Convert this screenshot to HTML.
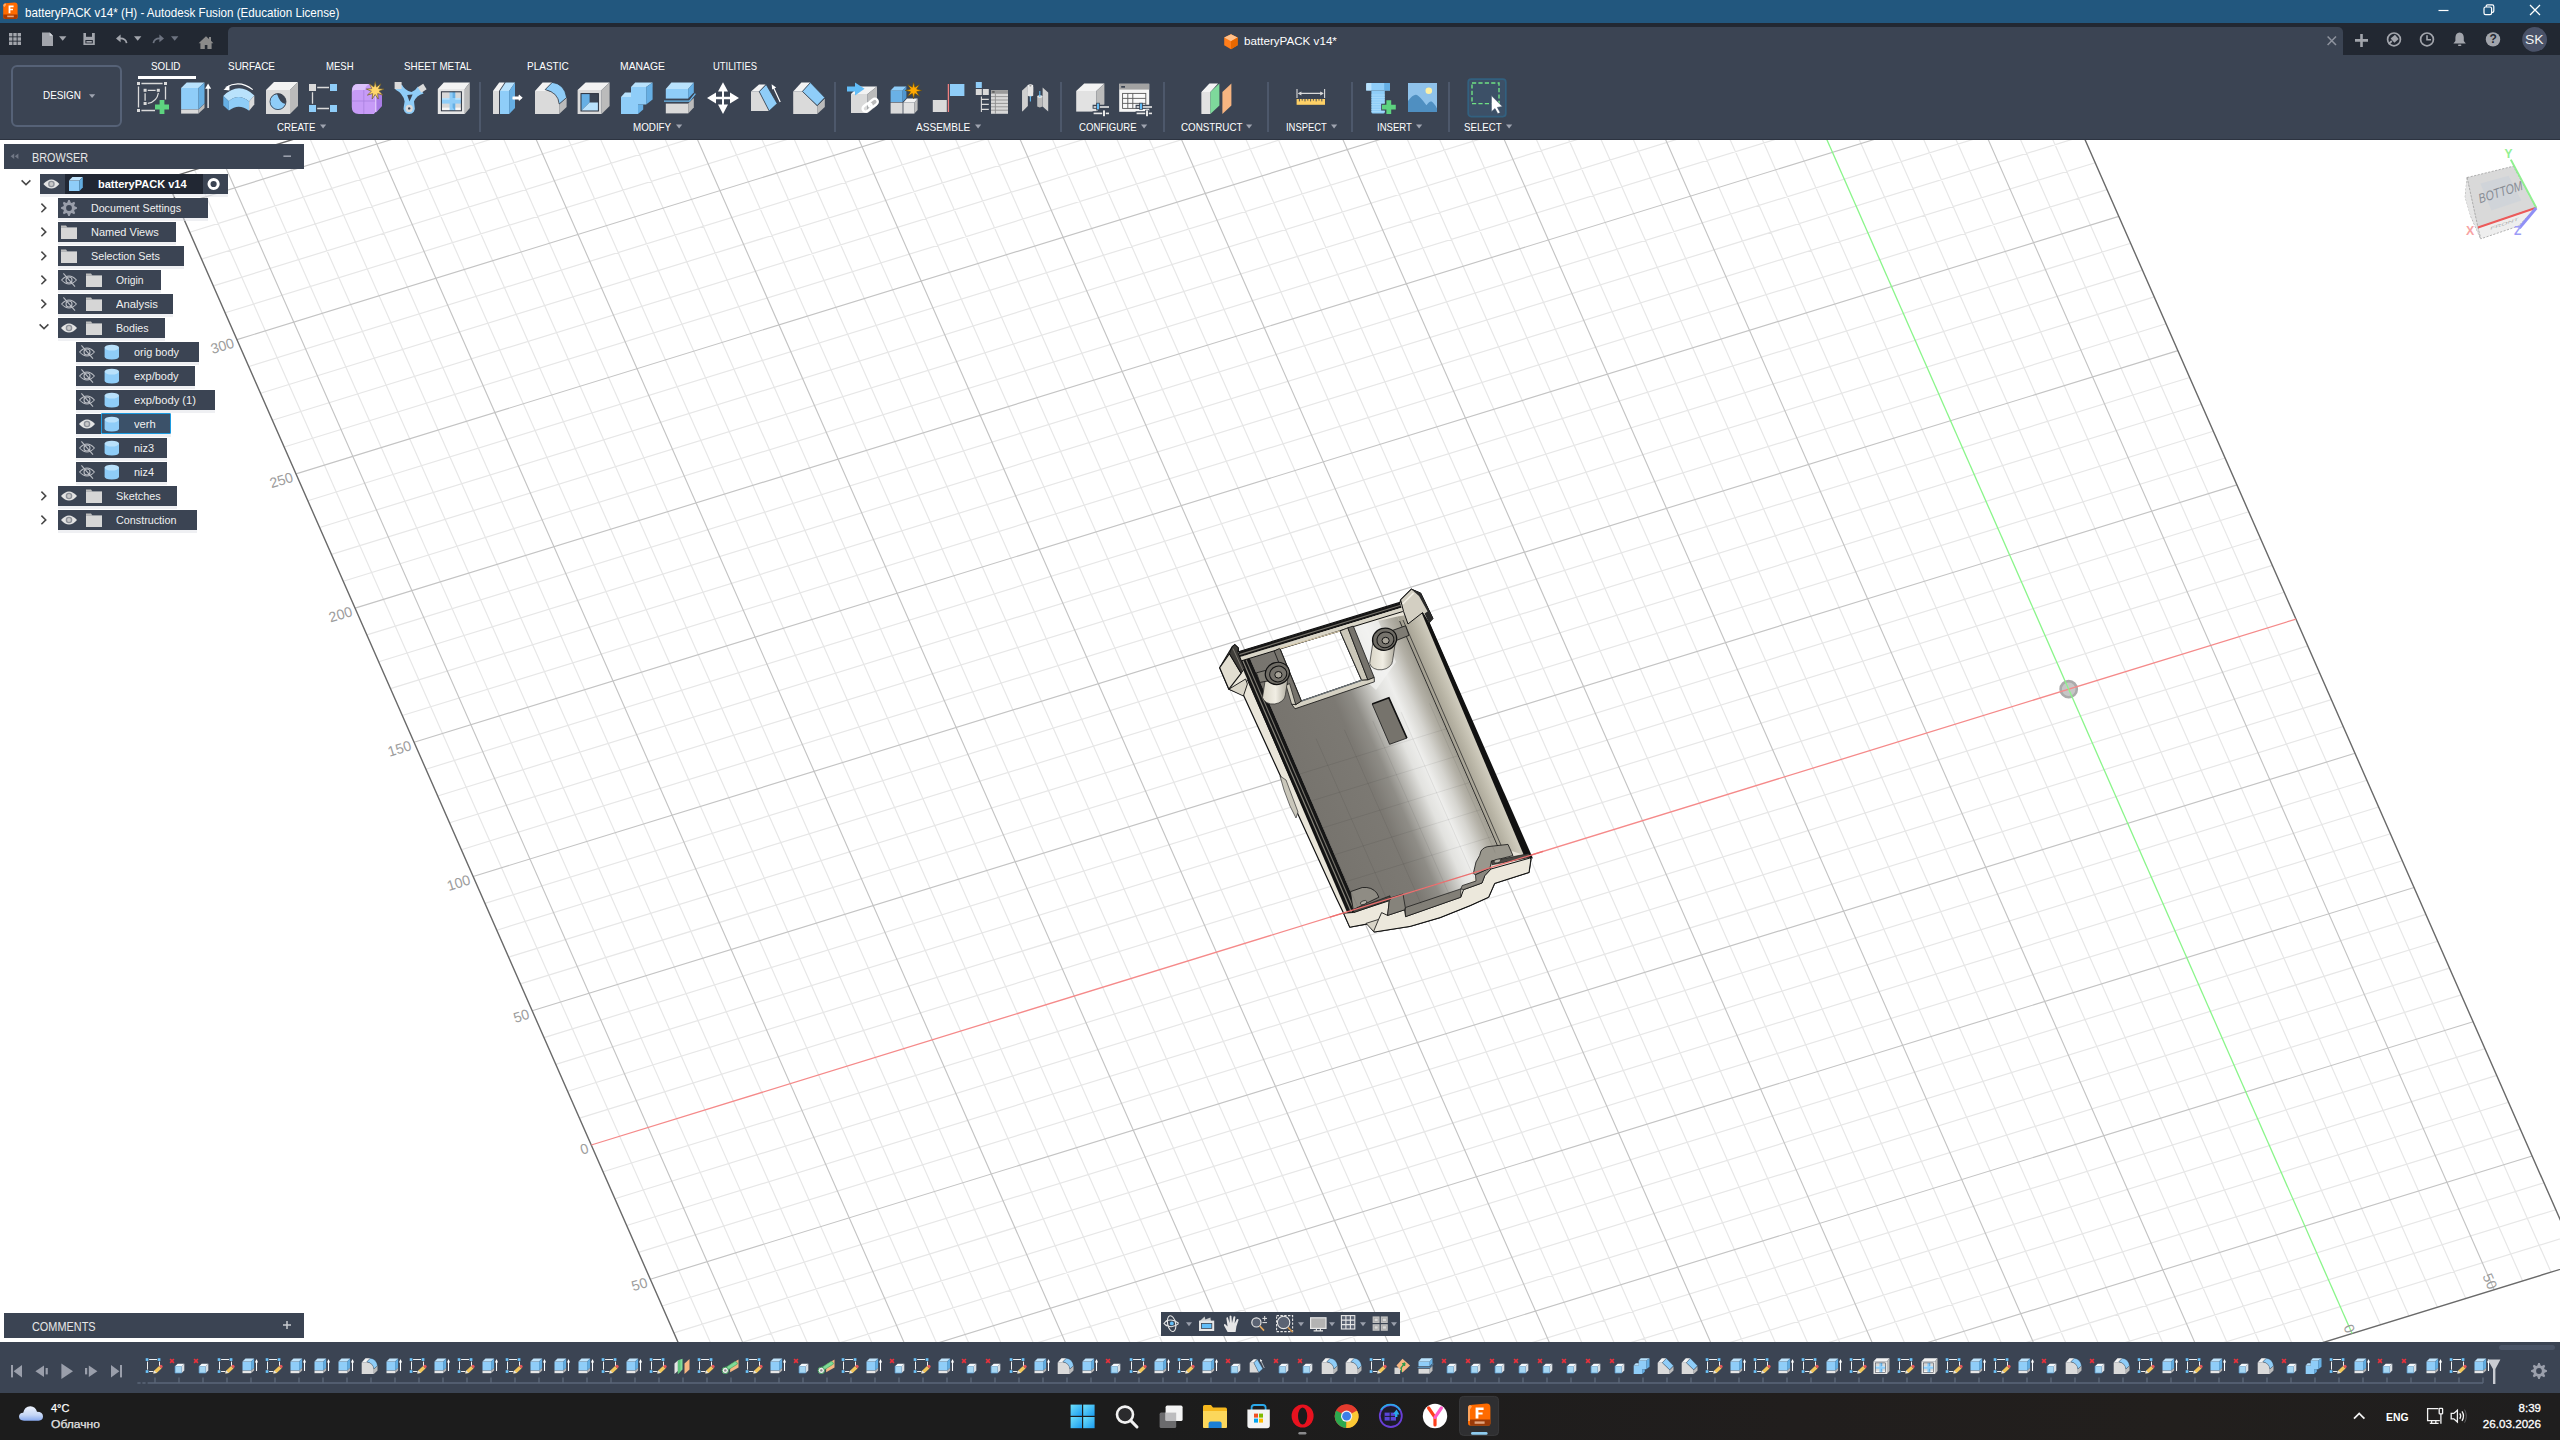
<!DOCTYPE html>
<html><head><meta charset="utf-8"><title>batteryPACK v14</title>
<style>
html,body{margin:0;padding:0}
body{width:2560px;height:1440px;position:relative;overflow:hidden;background:#fff;font-family:"Liberation Sans",sans-serif;}
svg{overflow:visible}
svg text{font-family:"Liberation Sans",sans-serif}
#cv{position:absolute;left:0;top:140px;width:2560px;height:1202px;overflow:hidden;background:#fff}
</style></head><body>

<div id="cv"><svg style="position:absolute;left:0;top:-140px" width="2560" height="1440">
<path d="M903.1 1780.5L194.5 169.8M960.0 1763.0L251.4 152.3M988.4 1754.2L279.8 143.5M1016.8 1745.4L308.2 134.7M1045.2 1736.7L336.6 126.0M1102.0 1719.1L393.4 108.4M1130.4 1710.4L421.8 99.7M1158.8 1701.6L450.2 90.9M1187.2 1692.8L478.6 82.1M1244.1 1675.3L535.5 64.6M1272.5 1666.5L563.9 55.9M1300.9 1657.8L592.3 47.1M1329.3 1649.0L620.7 38.3M1386.1 1631.5L677.5 20.8M1414.5 1622.7L705.9 12.0M1443.0 1614.0L734.4 3.3M1471.4 1605.2L762.8 -5.5M1528.2 1587.7L819.6 -23.0M1556.6 1578.9L848.0 -31.8M1585.0 1570.1L876.4 -40.6M1613.4 1561.4L904.8 -49.3M1670.3 1543.8L961.7 -66.9M1698.7 1535.1L990.1 -75.6M1727.1 1526.3L1018.5 -84.4M1755.5 1517.5L1046.9 -93.2M1812.3 1500.0L1103.7 -110.7M1840.7 1491.2L1132.1 -119.4M1869.1 1482.5L1160.5 -128.2M1897.5 1473.7L1188.9 -137.0M1954.4 1456.2L1245.8 -154.5M1982.8 1447.4L1274.2 -163.3M2011.2 1438.7L1302.6 -172.0M2039.6 1429.9L1331.0 -180.8M2096.4 1412.4L1387.8 -198.3M2124.8 1403.6L1416.2 -207.1M2153.3 1394.8L1444.7 -215.9M2181.7 1386.1L1473.1 -224.6M2238.5 1368.5L1529.9 -242.2M2266.9 1359.8L1558.3 -250.9M2295.3 1351.0L1586.7 -259.7M2323.7 1342.2L1615.1 -268.5M2380.6 1324.7L1672.0 -286.0M2409.0 1316.0L1700.4 -294.7M2437.4 1307.2L1728.8 -303.5M2465.8 1298.4L1757.2 -312.3M2522.6 1280.9L1814.0 -329.8M2551.0 1272.1L1842.4 -338.6M862.9 1762.4L2567.6 1236.5M851.1 1735.6L2555.8 1209.7M839.3 1708.7L2544.0 1182.8M815.7 1655.0L2520.4 1129.1M803.9 1628.2L2508.6 1102.3M792.0 1601.3L2496.8 1075.4M780.2 1574.5L2485.0 1048.6M756.6 1520.8L2461.3 994.9M744.8 1494.0L2449.5 968.1M733.0 1467.1L2437.7 941.2M721.2 1440.3L2425.9 914.4M697.6 1386.6L2402.3 860.7M685.8 1359.7L2390.5 833.8M673.9 1332.9L2378.7 807.0M662.1 1306.0L2366.9 780.2M638.5 1252.4L2343.2 726.5M626.7 1225.5L2331.4 699.6M614.9 1198.7L2319.6 672.8M603.1 1171.8L2307.8 645.9M579.5 1118.1L2284.2 592.2M567.7 1091.3L2272.4 565.4M555.8 1064.4L2260.6 538.5M544.0 1037.6L2248.8 511.7M520.4 983.9L2225.1 458.0M508.6 957.1L2213.3 431.2M496.8 930.2L2201.5 404.3M485.0 903.4L2189.7 377.5M461.4 849.7L2166.1 323.8M449.6 822.8L2154.3 296.9M437.7 796.0L2142.5 270.1M425.9 769.2L2130.7 243.3M402.3 715.5L2107.0 189.6M390.5 688.6L2095.2 162.7M378.7 661.8L2083.4 135.9M366.9 634.9L2071.6 109.0M343.3 581.2L2048.0 55.3M331.5 554.4L2036.2 28.5M319.6 527.5L2024.4 1.6M307.8 500.7L2012.6 -25.2M284.2 447.0L1988.9 -78.9M272.4 420.2L1977.1 -105.7M260.6 393.3L1965.3 -132.6M248.8 366.5L1953.5 -159.4M225.2 312.8L1929.9 -213.1M213.4 285.9L1918.1 -240.0M201.5 259.1L1906.3 -266.8M189.7 232.2L1894.5 -293.6" stroke="#e7e7e7" stroke-width="1.2" fill="none"/>
<path d="M931.5 1771.7L222.9 161.0M1073.6 1727.9L365.0 117.2M1215.7 1684.1L507.1 73.4M1357.7 1640.3L649.1 29.6M1499.8 1596.4L791.2 -14.3M1641.8 1552.6L933.2 -58.1M1783.9 1508.8L1075.3 -101.9M1926.0 1465.0L1217.4 -145.7M2068.0 1421.1L1359.4 -189.6M2210.1 1377.3L1501.5 -233.4M2494.2 1289.7L1785.6 -321.0M827.5 1681.9L2532.2 1156.0M768.4 1547.7L2473.1 1021.8M709.4 1413.4L2414.1 887.5M650.3 1279.2L2355.0 753.3M532.2 1010.8L2236.9 484.9M473.2 876.5L2177.9 350.6M414.1 742.3L2118.8 216.4M355.1 608.1L2059.8 82.2M296.0 473.9L2000.7 -52.0M237.0 339.6L1941.7 -186.3M177.9 205.4L1882.6 -320.5" stroke="#c4c4c4" stroke-width="1.15" fill="none"/>
<path d="M874.7 1789.3L2579.4 1263.4L1870.8 -347.3L166.1 178.6Z" stroke="#6a6a6a" stroke-width="1.4" fill="none"/>
<circle cx="2068.7" cy="689.2" r="8.1" fill="#c6c6c6" stroke="#ababab" stroke-width="2.6"/>
<path d="M591.3 1145.0L2296.0 619.1" stroke="#f58a8a" stroke-width="1.3" fill="none"/>
<path d="M2352.1 1333.5L1643.5 -277.2" stroke="#8af58a" stroke-width="1.3" fill="none"/>
<text transform="translate(650.3,1279.2) rotate(-17.14)" x="-4" y="6.6" text-anchor="end" font-size="14.2" fill="#9d9d9d">50</text>
<text transform="translate(591.3,1145.0) rotate(-17.14)" x="-4" y="6.6" text-anchor="end" font-size="14.2" fill="#9d9d9d">0</text>
<text transform="translate(532.2,1010.8) rotate(-17.14)" x="-4" y="6.6" text-anchor="end" font-size="14.2" fill="#9d9d9d">50</text>
<text transform="translate(473.2,876.5) rotate(-17.14)" x="-4" y="6.6" text-anchor="end" font-size="14.2" fill="#9d9d9d">100</text>
<text transform="translate(414.1,742.3) rotate(-17.14)" x="-4" y="6.6" text-anchor="end" font-size="14.2" fill="#9d9d9d">150</text>
<text transform="translate(355.1,608.1) rotate(-17.14)" x="-4" y="6.6" text-anchor="end" font-size="14.2" fill="#9d9d9d">200</text>
<text transform="translate(296.0,473.9) rotate(-17.14)" x="-4" y="6.6" text-anchor="end" font-size="14.2" fill="#9d9d9d">250</text>
<text transform="translate(237.0,339.6) rotate(-17.14)" x="-4" y="6.6" text-anchor="end" font-size="14.2" fill="#9d9d9d">300</text>
<text transform="translate(2352.1,1333.5) rotate(66.25)" x="-1.5" y="5.5" text-anchor="end" font-size="14.2" fill="#9d9d9d">0</text>
<text transform="translate(2494.2,1289.7) rotate(66.25)" x="-1.5" y="5.5" text-anchor="end" font-size="14.2" fill="#9d9d9d">50</text>
<defs>
<linearGradient id="flr" gradientUnits="userSpaceOnUse" x1="1311" y1="800" x2="1451.2" y2="738.8">
<stop offset="0" stop-color="#77746e"/><stop offset=".40" stop-color="#7c7973"/><stop offset=".52" stop-color="#8f8d87"/><stop offset=".62" stop-color="#bdbcb7"/><stop offset=".70" stop-color="#e2e2df"/><stop offset=".78" stop-color="#eeeeec"/><stop offset=".86" stop-color="#d6d5d0"/><stop offset=".94" stop-color="#b3b0a6"/><stop offset="1" stop-color="#a09d91"/></linearGradient>
<linearGradient id="rwl" gradientUnits="userSpaceOnUse" x1="1397.4" y1="616.4" x2="1421.4" y2="606.4">
<stop offset="0" stop-color="#9f9b8d"/><stop offset=".5" stop-color="#bab6a7"/><stop offset="1" stop-color="#d5d1c3"/></linearGradient>
<linearGradient id="boss" x1="0" y1="0" x2="1" y2="0"><stop offset="0" stop-color="#d8d4c6"/><stop offset=".5" stop-color="#f1eee4"/><stop offset="1" stop-color="#a9a598"/></linearGradient>
</defs>
<path d="M1219.7 667.8L1232.2 646.7L1234.8 644.6L1238.4 648.0L1238.4 651.8L1400.0 602.4L1400.6 599.9L1411.4 589.2L1420.6 593.2L1432.8 618.4L1428.8 622.8L1531.0 858.6L1529.0 872.4L1494.6 883.4L1488.6 897.2L1470.0 905.6L1440.0 917.6L1410.0 926.4L1374.4 932.0L1367.8 923.8L1349.8 927.2L1343.6 913.2L1336.4 898.2L1243.4 695.0L1228.9 689.2ZM1279.7 648.3L1340.1 631.0L1361.7 680.3L1301.3 701.1Z" fill="#e9e5d9" fill-rule="evenodd" stroke="#111111" stroke-width="1.2" stroke-linejoin="round"/>
<path d="M1247.0 651.4L1397.4 616.4L1497.0 846.6L1492.0 866.0L1476.0 876.0L1463.0 890.0L1406.0 910.0L1390.0 900.0L1358.6 910.4ZM1279.7 648.3L1340.1 631.0L1361.7 680.3L1301.3 701.1Z" fill="url(#flr)" fill-rule="evenodd"/>
<path d="M1352.0 628.0L1378.0 620.0L1396.0 662.0L1376.0 690.0L1366.0 681.0Z" fill="#f4f4f2" opacity=".7"/>
<path d="M1397.4 616.4L1422.6 612.6L1528.0 856.0L1497.0 846.6Z" fill="url(#rwl)"/>
<path d="M1399.6 621.0L1498.6 848.4" stroke="#222" stroke-width=".9" fill="none"/>
<path d="M1403.0 620.0L1502.0 847.4" stroke="#222" stroke-width=".7" fill="none"/>
<path d="M1421.0 611.6L1424.8 611.6L1533.0 858.6L1524.4 856.4Z" fill="#111111"/>
<path d="M1236.4 654.0L1247.0 651.4L1358.6 910.4L1348.0 914.6Z" fill="#161616"/>
<path d="M1240.4 655.0L1351.8 913.0" stroke="#8a877d" stroke-width="1.2" fill="none"/>
<path d="M1243.6 654.0L1355.0 912.0" stroke="#77746c" stroke-width="1.1" fill="none"/>
<path d="M1247.4 679.8L1343.6 899.6" stroke="#111111" stroke-width="1" fill="none"/>
<path d="M1238.4 651.8L1400.0 602.4L1401.6 607.7L1240.0 657.1Z" fill="#161616"/>
<path d="M1239.2 654.6L1400.8 605.2" stroke="#77746c" stroke-width="1.1" fill="none"/>
<path d="M1240.0 657.1L1401.6 607.7L1402.8 611.5L1241.2 660.9Z" fill="#d9d5c7"/>
<path d="M1241.2 660.9L1402.8 611.5" stroke="#111111" stroke-width="1" fill="none"/>
<path d="M1340.1 631.0L1347.8 627.8L1367.9 679.9L1361.7 680.3Z" fill="#cbc7b9" stroke="#111111" stroke-width=".8"/>
<path d="M1347.8 627.8L1353.3 626.1L1374.2 677.5L1367.9 679.9Z" fill="#76736c" stroke="#111111" stroke-width=".8"/>
<path d="M1301.3 701.1L1361.7 680.3L1367.9 679.9L1374.2 677.5L1374.4 681.8L1295.0 708.8L1291.6 704.2L1295.7 704.6Z" fill="#d5d1c3" stroke="#111111" stroke-width=".8"/>
<path d="M1301.3 701.1L1361.7 680.3" stroke="#6d7478" stroke-width="1.4" fill="none"/>
<path d="M1274.2 651.1L1279.7 648.3L1301.3 701.1L1295.7 704.6Z" fill="#76736c" stroke="#111111" stroke-width=".8"/>
<path d="M1286.0 685.2L1289.6 683.6L1295.7 704.6L1291.6 704.2Z" fill="#cfcbbd" stroke="#111111" stroke-width=".7"/>
<path d="M1279.7 648.3L1340.1 631.0" stroke="#d9ccae" stroke-width="1.2" fill="none"/>
<path d="M1372.2 704.0L1388.9 697.8L1406.9 738.1L1389.6 744.3Z" fill="#76736c"/>
<path d="M1372.2 704.0L1388.9 697.8L1406.9 738.1" stroke="#111111" stroke-width="1.6" fill="none"/>
<path d="M1406.9 738.1L1389.6 744.3L1372.2 704.0" stroke="#111111" stroke-width=".8" fill="none"/>
<path d="M1228.9 689.2L1245.6 679.0L1247.4 684.0L1243.4 696.0Z" fill="#dad6c9" stroke="#111111" stroke-width=".9"/>
<path d="M1219.7 667.8L1229.4 653.6L1241.1 673.3L1228.9 689.2Z" fill="#e2ded1" stroke="#111111" stroke-width="1.1" stroke-linejoin="round"/>
<path d="M1229.4 653.6L1232.2 646.7L1234.8 644.6L1238.4 648.0L1237.8 652.4L1244.6 668.4L1241.1 673.3Z" fill="#3f3d39" stroke="#111111" stroke-width="1" stroke-linejoin="round"/>
<path d="M1233.0 648.6L1243.0 670.6" stroke="#8a877d" stroke-width=".8" fill="none"/>
<path d="M1400.6 599.9L1411.4 589.2L1420.6 593.2L1432.8 618.4L1428.8 622.8L1422.6 612.6L1408.0 624.0L1403.6 611.6Z" fill="#d3cfc2" stroke="#111111" stroke-width="1"/>
<path d="M1411.4 589.2L1420.6 593.2L1432.8 618.4L1428.8 622.8L1424.6 613.4L1427.6 611.6L1419.0 596.0Z" fill="#2a2a2a"/>
<path d="M1402.6 604.0L1413.6 593.0" stroke="#f3f0e6" stroke-width="1.6" fill="none"/>
<path d="M1266.0 674.8L1262.5 697.6A11.6 8.7 -8 0 0 1285.4 694.8L1288.8 672.0Z" fill="url(#boss)" stroke="#2a2a28" stroke-width=".7"/><path d="M1277.4 667.4L1256.4 672.8L1259.8 682.4L1277.4 679.4Z" fill="#7f7c74" stroke="#111111" stroke-width=".8"/><ellipse cx="1277.4" cy="673.4" rx="12.2" ry="11" transform="rotate(-17 1277.4 673.4)" fill="#6f6c65" stroke="#111111" stroke-width="1.2"/><ellipse cx="1278.0" cy="674.1999999999999" rx="8.6" ry="7.8" transform="rotate(-17 1277.4 673.4)" fill="#77746d" stroke="#111111" stroke-width="1"/><ellipse cx="1278.4" cy="674.8" rx="3.6" ry="3.3" fill="#a9a59a" stroke="#111111" stroke-width="1"/>
<path d="M1373.2 640.6L1369.7 663.4A11.6 8.7 -8 0 0 1392.6 660.6L1396.0 637.8Z" fill="url(#boss)" stroke="#2a2a28" stroke-width=".7"/><path d="M1384.6 633.2L1405.6 625.8L1409.0 635.4L1384.6 645.2Z" fill="#7f7c74" stroke="#111111" stroke-width=".8"/><ellipse cx="1384.6" cy="639.2" rx="12.2" ry="11" transform="rotate(-17 1384.6 639.2)" fill="#6f6c65" stroke="#111111" stroke-width="1.2"/><ellipse cx="1385.1999999999998" cy="640.0" rx="8.6" ry="7.8" transform="rotate(-17 1384.6 639.2)" fill="#77746d" stroke="#111111" stroke-width="1"/><ellipse cx="1385.6" cy="640.6" rx="3.6" ry="3.3" fill="#a9a59a" stroke="#111111" stroke-width="1"/>
<path d="M1353.2 912.5L1389.3 900.7L1387.6 915.4L1404.6 909.8L1405.6 916.6L1460.8 897.2L1463.6 889.6L1482.0 883.0L1484.8 875.6L1491.0 869.0L1529.4 858.2L1531.0 858.6L1529.0 872.4L1494.6 883.4L1488.6 897.2L1470.0 905.6L1440.0 917.6L1410.0 926.4L1374.4 932.0L1367.8 923.8L1349.8 927.2L1343.6 913.2Z" fill="#ece8dc" stroke="#111111" stroke-width="1"/>
<path d="M1405.3 907.6L1460.8 888.9L1460.8 897.2L1405.6 916.6Z" fill="#827f77" stroke="#111111" stroke-width=".7"/>
<path d="M1390.0 898.0L1403.0 894.0L1405.3 907.6L1404.6 909.8L1387.6 915.4L1389.3 900.7Z" fill="#86837b" stroke="#111111" stroke-width=".7"/>
<path d="M1475.4 874.6L1490.0 868.0L1491.0 869.0L1484.8 875.6L1482.0 883.0L1463.6 889.6L1460.8 888.9L1462.2 885.6L1476.0 881.0Z" fill="#8a877f" stroke="#111111" stroke-width=".7"/>
<path d="M1366.0 923.4L1378.6 919.4L1373.6 931.4Z" fill="#d8d4c7" stroke="#111111" stroke-width=".8"/>
<path d="M1378.6 919.4L1381.6 912.6L1387.6 915.4" stroke="#111111" stroke-width=".9" fill="none"/>
<path d="M1350.4 891.7L1362.2 887.5Q1372 886.6 1376.8 893L1378.9 897.2L1353.2 909.7Z" fill="#8f8c84" stroke="#111111" stroke-width=".8"/>
<path d="M1353.2 909.7L1390.0 895.8L1390.6 899.4L1354.0 912.6Z" fill="#4a4843" stroke="#111111" stroke-width=".6"/>
<ellipse cx="1363.6" cy="902.6" rx="3.4" ry="1.8" transform="rotate(-20 1363.6 902.6)" fill="#b5b2a8" stroke="#111111" stroke-width=".6"/>
<path d="M1479.6 855.6L1481 851Q1484 846.6 1490 846.4L1508 844.4L1513 855.6L1491.4 861.1L1490 868L1475.4 874.6L1473.3 873.6L1476 862Z" fill="#9a978d" stroke="#111111" stroke-width=".8"/>
<path d="M1491.4 861.1L1528.9 853.5L1530.0 857.4L1492.0 864.8Z" fill="#4a4843" stroke="#111111" stroke-width=".6"/>
<ellipse cx="1497.4" cy="861" rx="3.4" ry="1.8" transform="rotate(-14 1497.4 861)" fill="#b5b2a8" stroke="#111111" stroke-width=".6"/>
<path d="M1280.0 776.0L1286.0 780.0L1298.0 812.0L1296.0 818.0L1290.0 806.0L1284.0 790.0Z" fill="#c9c6ba" stroke="#333" stroke-width=".7"/>
<clipPath id="flc"><path d="M1247.0 651.4L1397.4 616.4L1497.0 846.6L1492.0 866.0L1476.0 876.0L1463.0 890.0L1406.0 910.0L1390.0 900.0L1358.6 910.4Z"/></clipPath>
<path d="M1358.1 1274.3L1145.5 791.1M1386.5 1265.5L1173.9 782.3M1414.9 1256.8L1202.3 773.6M1443.3 1248.0L1230.7 764.8M1471.7 1239.2L1259.1 756.0M1500.1 1230.5L1287.5 747.3M1528.5 1221.7L1316.0 738.5M1556.9 1212.9L1344.4 729.7M1585.4 1204.2L1372.8 721.0M1613.8 1195.4L1401.2 712.2M1642.2 1186.6L1429.6 703.4M1670.6 1177.9L1458.0 694.7M1699.0 1169.1L1486.4 685.9M1289.4 1265.0L1744.0 1124.7M1277.6 1238.1L1732.2 1097.9M1265.8 1211.3L1720.4 1071.0M1254.0 1184.4L1708.6 1044.2M1242.2 1157.6L1696.8 1017.4M1230.4 1130.8L1685.0 990.5M1218.6 1103.9L1673.2 963.7M1206.8 1077.1L1661.3 936.8M1194.9 1050.2L1649.5 910.0M1183.1 1023.4L1637.7 883.1M1171.3 996.5L1625.9 856.3M1159.5 969.7L1614.1 829.4M1147.7 942.8L1602.3 802.6M1135.9 916.0L1590.5 775.8M1124.1 889.1L1578.7 748.9M1112.3 862.3L1566.9 722.1M1100.5 835.5L1555.1 695.2" stroke="#000" stroke-opacity=".07" stroke-width="1" fill="none" clip-path="url(#flc)"/>
<path d="M1330.0 917.1L1543.1 851.4" stroke="#ee6f6f" stroke-width="1.2"/>

<g opacity=".92">
<path d="M2467.1 177.5L2465.2 197L2471 217L2480.6 238.6L2478 227.5Z" fill="#d9d9d9" stroke="#8d8d8d" stroke-width=".7" stroke-dasharray="2.2 1.4"/>
<path d="M2467.1 177.5L2478 227.5L2480.6 238.6L2470 214L2465.2 197Z" fill="#e3e3e3"/>
<path d="M2478 227.5L2536.2 207.5L2518.6 226L2480.8 238.8Z" fill="#ededed" stroke="#8d8d8d" stroke-width=".7" stroke-dasharray="2.2 1.4"/>
<path d="M2467.1 177.5L2513.3 166.2L2536.2 207.5L2478 227.5Z" fill="#d6d6d6" stroke="#8d8d8d" stroke-width=".7" stroke-dasharray="2.2 1.4"/>
<path d="M2480.4 183.6L2508.6 175.8L2521.4 200.6L2491.4 210.6Z" fill="#cdd1d6"/>
<text transform="translate(2479.6,203.4) rotate(-17.5) skewX(-10)" font-size="13.4" fill="#7e848d" textLength="45.5" lengthAdjust="spacingAndGlyphs">BOTTOM</text>
<text transform="translate(2490,230) rotate(-19) skewX(-30) scale(1,.45)" font-size="8" fill="#a5a5a5" textLength="30" lengthAdjust="spacingAndGlyphs">FRONT</text>
</g>
<path d="M2478 227.5L2536.2 207.8" stroke="#ec5a5a" stroke-width="2"/>
<path d="M2536.2 207.6L2510.8 159.6" stroke="#8ff08f" stroke-width="2"/>
<path d="M2536.2 208L2519.4 228" stroke="#8f8ff5" stroke-width="3"/>
<text x="2466" y="235.4" font-size="12.4" fill="#f7a3a3" font-weight="bold">X</text>
<text x="2504.6" y="157.6" font-size="12" fill="#93f093" font-weight="bold">Y</text>
<text x="2514" y="235.2" font-size="12" fill="#9c9cf7" font-weight="bold">Z</text>
</svg></div>
<div style="position:absolute;left:0px;top:0px;width:2560px;height:23px;background:#22577e;"></div>
<svg style="position:absolute;left:2px;top:2px;" width="17" height="19" viewBox="0 0 17 19">
      <path d="M3.2 1.2 L12.5 0.6 Q15.6 0.6 15.6 3.6 L15.6 15 Q15.6 17 13.6 17 L3.5 17 Q1.2 17 1.2 14.8 L1.2 3.6 Q1.2 1.4 3.2 1.2Z" fill="#ff6b00"/>
      <path d="M1.2 12.4 L15.6 12.4 L15.6 15 Q15.6 17 13.6 17 L3.5 17 Q1.2 17 1.2 14.8Z" fill="#a83a00"/>
      <path d="M1.2 4 Q1.2 1.6 3.2 1.2 L4.2 2.4 L2.6 5Z" fill="#ffab66"/>
      <path d="M6.6 3.6 H11.6 V5.2 H8.4 V6.8 H11 V8.3 H8.4 V11.2 H6.6Z" fill="#fff"/>
      <rect x="5.2" y="13.6" width="6.6" height="1.6" fill="#e7a77e"/></svg>
<div style="position:absolute;left:24.60px;transform-origin:0 0;top:3.95px;font-size:13.6px;line-height:17.68px;color:#ffffff;white-space:pre;transform:scaleX(0.8549);">batteryPACK v14* (H) - Autodesk Fusion (Education License)</div>
<svg style="position:absolute;left:2430px;top:0px;" width="130" height="23">
      <path d="M8.5 10.5H18.5" stroke="#fff" stroke-width="1.2"/>
      <rect x="54" y="7" width="7.6" height="7.6" rx="1.6" fill="none" stroke="#fff" stroke-width="1.2"/>
      <path d="M56.2 7V6.2Q56.2 4.8 57.6 4.8H62.2Q63.8 4.8 63.8 6.4V11Q63.8 12.4 62.4 12.4H61.6" fill="none" stroke="#fff" stroke-width="1.2"/>
      <path d="M100 5L110 15M110 5L100 15" stroke="#fff" stroke-width="1.3"/></svg>
<div style="position:absolute;left:0px;top:23px;width:2560px;height:32px;background:#222832;"></div>
<div style="position:absolute;left:228px;top:27px;width:2115px;height:28px;background:#3b4453;border-radius:5px 5px 0 0;"></div>
<svg style="position:absolute;left:0px;top:0px;" width="240" height="60"><rect x="9.0" y="33.0" width="3.4" height="3.4" fill="#a2a5ac"/><rect x="9.0" y="37.3" width="3.4" height="3.4" fill="#a2a5ac"/><rect x="9.0" y="41.6" width="3.4" height="3.4" fill="#a2a5ac"/><rect x="13.3" y="33.0" width="3.4" height="3.4" fill="#a2a5ac"/><rect x="13.3" y="37.3" width="3.4" height="3.4" fill="#a2a5ac"/><rect x="13.3" y="41.6" width="3.4" height="3.4" fill="#a2a5ac"/><rect x="17.6" y="33.0" width="3.4" height="3.4" fill="#a2a5ac"/><rect x="17.6" y="37.3" width="3.4" height="3.4" fill="#a2a5ac"/><rect x="17.6" y="41.6" width="3.4" height="3.4" fill="#a2a5ac"/><path d="M42 32.4H49.6L53 35.8V46H42Z" fill="#a2a5ac"/><path d="M49.6 32.4V35.8H53Z" fill="#d5d8de"/><path d="M59 36.2h7.4l-3.7 4.6z" fill="#a2a5ac"/><path d="M83.4 33H94.8V45H83.4Z" fill="#a2a5ac"/><rect x="86" y="33" width="6" height="3.8" fill="#222832"/><rect x="85.4" y="40" width="7.4" height="3.4" fill="#222832"/><rect x="86.4" y="41" width="5.4" height="1.6" fill="#a2a5ac"/><path d="M119.6 38.4Q126 38.2 126.6 43.2" fill="none" stroke="#a2a5ac" stroke-width="1.7"/><path d="M116 38.4L120.6 34.6V42.2Z" fill="#a2a5ac"/><path d="M134 36.2h7.4l-3.7 4.6z" fill="#a2a5ac"/><path d="M160.4 38.4Q154 38.2 153.4 43.2" fill="none" stroke="#6d7380" stroke-width="1.7"/><path d="M164 38.4L159.4 34.6V42.2Z" fill="#6d7380"/><path d="M171 36.2h7.4l-3.7 4.6z" fill="#6d7380"/><path d="M198.6 43.2L206 36.2L209 39V37H211V40.8L213.4 43.2H211.6V49H207.4V45H204.8V49H200.4V43.2Z" fill="#8a8a8a"/></svg>
<svg style="position:absolute;left:1222px;top:33px;" width="18" height="18" viewBox="0 0 18 18">
      <path d="M9 1.2L15.6 4.6V12.2L9 16.2L2.2 12.2V4.6Z" fill="#ff7d1a"/>
      <path d="M9 1.2L15.6 4.6L9 8.2L2.2 4.6Z" fill="#ffc08a"/>
      <path d="M9 8.2L15.6 4.6V12.2L9 16.2Z" fill="#e86800"/></svg>
<div style="position:absolute;left:1243.80px;transform-origin:0 0;top:34.24px;font-size:11.2px;line-height:14.56px;color:#ffffff;white-space:pre;transform:scaleX(1.0399);">batteryPACK v14*</div>
<svg style="position:absolute;left:0px;top:0px;" width="2560" height="60"><path d="M2327.6 36.4L2336 45M2336 36.4L2327.6 45" stroke="#8e939e" stroke-width="1.5" fill="none"/><path d="M2355 40.4H2368M2361.5 34V47" stroke="#a2a5ac" stroke-width="2.6" fill="none"/><circle cx="2394" cy="39.4" r="6.4" fill="none" stroke="#a2a5ac" stroke-width="1.7"/><path d="M2390.6 38.6L2395 34.8L2398.6 39L2394.4 42.8Z" fill="#a2a5ac"/><path d="M2388.6 44L2391.8 41" stroke="#a2a5ac" stroke-width="1.8"/><circle cx="2427" cy="39.4" r="6.4" fill="none" stroke="#a2a5ac" stroke-width="1.7"/><path d="M2427 35.2V39.8H2431" stroke="#a2a5ac" stroke-width="1.6" fill="none"/><path d="M2459.6 32.4Q2463.8 33 2463.8 37.6V41L2465.8 43.6H2453.4L2455.4 41V37.6Q2455.4 33 2459.6 32.4Z" fill="#a2a5ac"/><rect x="2458" y="44.4" width="3.4" height="1.6" rx=".8" fill="#a2a5ac"/><circle cx="2493" cy="39.4" r="7.2" fill="#a2a5ac"/><circle cx="2534.6" cy="39.4" r="12.4" fill="#4a5268"/></svg>
<div style="position:absolute;left:2489.60px;transform-origin:0 0;top:31.84px;font-size:12px;line-height:15.6px;color:#222832;white-space:pre;font-weight:bold;">?</div>
<div style="position:absolute;left:2525.00px;transform-origin:0 0;top:31.64px;font-size:12.6px;line-height:16.38px;color:#f2f2f2;white-space:pre;transform:scaleX(1.1065);">SK</div>
<div style="position:absolute;left:0px;top:55px;width:2560px;height:85px;background:#3b4453;"></div>
<div style="position:absolute;left:0px;top:139px;width:2560px;height:1px;background:#2c3340;"></div>
<div style="position:absolute;left:11px;top:65px;width:111px;height:62px;border:2px solid #566277;border-radius:6px;box-sizing:border-box"></div>
<div style="position:absolute;left:43.20px;transform-origin:0 0;top:89.24px;font-size:10.2px;line-height:13.26px;color:#ffffff;white-space:pre;transform:scaleX(0.9717);">DESIGN</div>
<svg style="position:absolute;left:88px;top:92px;" width="10" height="8"><path d="M1 2.2h6.2l-3.1 3.8z" fill="#9fa4b0"/></svg>
<div style="position:absolute;left:150.50px;transform-origin:0 0;top:59.64px;font-size:10.2px;line-height:13.26px;color:#ffffff;white-space:pre;transform:scaleX(0.9638);">SOLID</div>
<div style="position:absolute;left:228.00px;transform-origin:0 0;top:59.64px;font-size:10.2px;line-height:13.26px;color:#ffffff;white-space:pre;transform:scaleX(0.9756);">SURFACE</div>
<div style="position:absolute;left:326.20px;transform-origin:0 0;top:59.64px;font-size:10.2px;line-height:13.26px;color:#ffffff;white-space:pre;transform:scaleX(0.9365);">MESH</div>
<div style="position:absolute;left:404.20px;transform-origin:0 0;top:59.64px;font-size:10.2px;line-height:13.26px;color:#ffffff;white-space:pre;transform:scaleX(0.9670);">SHEET METAL</div>
<div style="position:absolute;left:527.00px;transform-origin:0 0;top:59.64px;font-size:10.2px;line-height:13.26px;color:#ffffff;white-space:pre;transform:scaleX(0.9832);">PLASTIC</div>
<div style="position:absolute;left:620.00px;transform-origin:0 0;top:59.64px;font-size:10.2px;line-height:13.26px;color:#ffffff;white-space:pre;transform:scaleX(1.0179);">MANAGE</div>
<div style="position:absolute;left:713.00px;transform-origin:0 0;top:59.64px;font-size:10.2px;line-height:13.26px;color:#ffffff;white-space:pre;transform:scaleX(0.9242);">UTILITIES</div>
<div style="position:absolute;left:138.4px;top:75.6px;width:57.6px;height:3px;background:#ffffff;"></div>
<div style="position:absolute;left:277.00px;transform-origin:0 0;top:120.74px;font-size:10.2px;line-height:13.26px;color:#ffffff;white-space:pre;transform:scaleX(0.9479);">CREATE</div>
<svg style="position:absolute;left:319.9px;top:124px;" width="8" height="6"><path d="M0 0.4h6.2l-3.1 4z" fill="#9fa4b0"/></svg>
<div style="position:absolute;left:633.00px;transform-origin:0 0;top:120.74px;font-size:10.2px;line-height:13.26px;color:#ffffff;white-space:pre;transform:scaleX(0.9631);">MODIFY</div>
<svg style="position:absolute;left:675.6px;top:124px;" width="8" height="6"><path d="M0 0.4h6.2l-3.1 4z" fill="#9fa4b0"/></svg>
<div style="position:absolute;left:916.20px;transform-origin:0 0;top:120.74px;font-size:10.2px;line-height:13.26px;color:#ffffff;white-space:pre;transform:scaleX(0.9874);">ASSEMBLE</div>
<svg style="position:absolute;left:974.9px;top:124px;" width="8" height="6"><path d="M0 0.4h6.2l-3.1 4z" fill="#9fa4b0"/></svg>
<div style="position:absolute;left:1079.20px;transform-origin:0 0;top:120.74px;font-size:10.2px;line-height:13.26px;color:#ffffff;white-space:pre;transform:scaleX(0.9412);">CONFIGURE</div>
<svg style="position:absolute;left:1141.2px;top:124px;" width="8" height="6"><path d="M0 0.4h6.2l-3.1 4z" fill="#9fa4b0"/></svg>
<div style="position:absolute;left:1180.50px;transform-origin:0 0;top:120.74px;font-size:10.2px;line-height:13.26px;color:#ffffff;white-space:pre;transform:scaleX(0.9605);">CONSTRUCT</div>
<svg style="position:absolute;left:1246.4px;top:124px;" width="8" height="6"><path d="M0 0.4h6.2l-3.1 4z" fill="#9fa4b0"/></svg>
<div style="position:absolute;left:1286.20px;transform-origin:0 0;top:120.74px;font-size:10.2px;line-height:13.26px;color:#ffffff;white-space:pre;transform:scaleX(0.9229);">INSPECT</div>
<svg style="position:absolute;left:1331.4px;top:124px;" width="8" height="6"><path d="M0 0.4h6.2l-3.1 4z" fill="#9fa4b0"/></svg>
<div style="position:absolute;left:1377.00px;transform-origin:0 0;top:120.74px;font-size:10.2px;line-height:13.26px;color:#ffffff;white-space:pre;transform:scaleX(0.9404);">INSERT</div>
<svg style="position:absolute;left:1416.4px;top:124px;" width="8" height="6"><path d="M0 0.4h6.2l-3.1 4z" fill="#9fa4b0"/></svg>
<div style="position:absolute;left:1464.20px;transform-origin:0 0;top:120.74px;font-size:10.2px;line-height:13.26px;color:#ffffff;white-space:pre;transform:scaleX(0.9526);">SELECT</div>
<svg style="position:absolute;left:1506.4px;top:124px;" width="8" height="6"><path d="M0 0.4h6.2l-3.1 4z" fill="#9fa4b0"/></svg>
<div style="position:absolute;left:479.4px;top:82px;width:1.8px;height:50px;background:#4d586b;"></div>
<div style="position:absolute;left:834.4px;top:82px;width:1.8px;height:50px;background:#4d586b;"></div>
<div style="position:absolute;left:1060.4px;top:82px;width:1.8px;height:50px;background:#4d586b;"></div>
<div style="position:absolute;left:1163.4px;top:82px;width:1.8px;height:50px;background:#4d586b;"></div>
<div style="position:absolute;left:1267.4px;top:82px;width:1.8px;height:50px;background:#4d586b;"></div>
<div style="position:absolute;left:1351.4px;top:82px;width:1.8px;height:50px;background:#4d586b;"></div>
<div style="position:absolute;left:1448.4px;top:82px;width:1.8px;height:50px;background:#4d586b;"></div>
<svg style="position:absolute;left:0px;top:0px;" width="2560" height="140"><g transform="translate(137,82)"><g fill="#dadada"><rect x="0" y="0" width="3" height="3"/><rect x="27" y="0" width="3" height="3"/><rect x="0" y="27" width="3" height="3"/>
<rect x="6.6" y="6.8" width="3" height="3"/><rect x="19.8" y="6.8" width="3" height="3"/><rect x="6.6" y="20" width="3" height="3"/></g>
<path d="M4.4 1.5H25.6M1.5 4.4V25.6M28.5 4.4V17.4M4.4 28.5H18M10.8 8.3H18.6M8.1 11.2V18.8" stroke="#dadada" stroke-width="1.3" fill="none"/>
<path d="M21.4 10.8Q20 19.6 10.8 21.4" stroke="#dadada" stroke-width="1.2" fill="none"/>
<path d="M22.6 18H27.4V22.6H32V27.4H27.4V32H22.6V27.4H18V22.6H22.6Z" fill="#5dd37f"/></g><g transform="translate(180.5,82)"><path d="M0.6 27.4H18V31.6H0.6Z" fill="#dadada"/><path d="M18 27.4L24 21.8V26L18 31.6Z" fill="#bbbbbb"/>
<path d="M0.6 6H18V27.2H0.6Z" fill="#8fcdf8"/><path d="M0.6 6L6.2 0.4H24L18 6Z" fill="#b9e2fc"/><path d="M18 6L24 0.4V21.6L18 27.2Z" fill="#66afe4"/>
<path d="M27.6 26V4" stroke="#ffffff" stroke-width="1.3"/><path d="M24.6 6.8L27.6 1.4L30.6 6.8Z" fill="#ffffff"/></g><g transform="translate(222.7,82)"><path d="M30 7.6Q17 -2.6 3 5.4" stroke="#ffffff" stroke-width="1.2" fill="none"/><path d="M0.8 7.8L6.6 3L6.8 8.6Z" fill="#ffffff"/>
<path d="M0.6 14Q16 -1 31.6 13.4L26.4 19.6Q16 10.6 6.2 19.2Z" fill="#b9e2fc"/>
<path d="M0.6 14L6.2 19.2V28.6L0.6 23.4Z" fill="#66afe4"/>
<path d="M6.2 19.2Q16 10.6 26.4 19.6V28.8Q16 20.6 6.2 28.6Z" fill="#8fcdf8"/>
<path d="M26.4 19.6L31.6 13.4V22.4L26.4 28.8Z" fill="#dadada"/></g><g transform="translate(266,82)"><path d="M0 8H24V32H0Z" fill="#dadada"/><path d="M0 8L8 0H32L24 8Z" fill="#f3f3f3"/><path d="M24 8L32 0V24L24 32Z" fill="#bbbbbb"/>
<circle cx="12" cy="19.6" r="8" fill="#3b4453"/><path d="M11 12Q14.6 22.4 19.6 21.6A8 8 0 1 1 11 12Z" fill="#8fcdf8"/>
<circle cx="12" cy="19.6" r="8" fill="none" stroke="#323a47" stroke-width=".8"/></g><g transform="translate(309,82)"><rect x="0" y="2" width="7" height="7" fill="#dadada"/><rect x="21" y="2" width="7" height="7" fill="#8fcdf8"/><rect x="0" y="23" width="7" height="7" fill="#8fcdf8"/><rect x="21" y="23" width="7" height="7" fill="#8fcdf8"/>
<path d="M8.2 5.5H20M8.2 26.5H20M3.5 10.2V21.8" stroke="#dadada" stroke-width="1.3" fill="none"/></g><g transform="translate(351.8,82)"><path d="M6 2H18L24 8Q30 9 30 14V24L22 32H7Q0 32 0 25V9Q0 2 6 2Z" fill="#c79bf7"/>
<path d="M6 2H17Q14 4 13 8H3Q1.4 8 0.6 10Q0 2 6 2Z" fill="#dcc2fb"/>
<path d="M24 10Q30 9.4 30 14V24L24.4 30.4Z" fill="#a97be6"/><path d="M0 19H24M12 8V32" stroke="#a880de" stroke-width=".8" fill="none"/>
<path d="M24 10V30" stroke="#e9d8fd" stroke-width="1"/><path d="M23.40 -0.40L24.73 4.94L29.19 1.71L26.78 6.65L32.26 7.04L27.24 9.28L31.19 13.10L25.91 11.59L26.48 17.06L23.40 12.50L20.32 17.06L20.89 11.59L15.61 13.10L19.56 9.28L14.54 7.04L20.02 6.65L17.61 1.71L22.07 4.94Z" fill="#ffd56b" stroke="#6a5a2a" stroke-width=".7"/></g><g transform="translate(394.6,82)"><path d="M0.6 7.6L7.2 2.6Q10 8.6 16.9 10Q21 8.6 23.4 4.6L29 11.4Q21.6 13.4 19.4 19.6L20 24.6A5.7 5.7 0 1 1 9.2 24.6L10 19.4Q8.4 11.4 0.6 7.6Z" fill="#8fcdf8"/>
<path d="M12.6 12.9L18 12.6L14.9 19.4Z" fill="#3b4453"/>
<rect x="0" y="0" width="7" height="7" fill="#dadada"/><path d="M23.2 5.2L28.6 1.8L32 7.2L26.8 10.8Z" fill="#dadada"/>
<circle cx="14.6" cy="26.4" r="3.6" fill="#dadada"/><circle cx="14.6" cy="26.4" r="1.2" fill="#3b4453"/></g><g transform="translate(437.8,82)"><path d="M0 7H27V32H0Z" fill="#e6e6e6"/><path d="M0 7L6 0.4H32L27 7Z" fill="#f3f3f3"/><path d="M27 7L32 0.4V26L27 32Z" fill="#bbbbbb"/>
<rect x="3.6" y="9.8" width="20" height="19" fill="#d8d8d8"/><path d="M3.6 25.6H23.6V28.8H3.6Z" fill="#f6f6f6"/>
<path d="M3.6 16H23.6V21.6H3.6Z" fill="#8fcdf8"/><path d="M11.8 9.8H17.4V28.8H11.8Z" fill="#8fcdf8"/><path d="M14.8 9.8H17.4V16H14.8ZM14.8 21.6H17.4V28.8L14.8 25.6Z" fill="#66afe4"/><path d="M3.6 16H11.8V17.8H3.6ZM17.4 16H23.6V17.8H17.4Z" fill="#b9e2fc"/>
<rect x="3.6" y="9.8" width="20" height="19" fill="none" stroke="#2a303c" stroke-width="1"/></g><g transform="translate(492.6,82)"><path d="M0.4 9H6.4V32H0.4Z" fill="#dadada"/><path d="M0.4 9L6.6 0.4H12L6.4 9Z" fill="#f3f3f3"/>
<path d="M7.4 9H16.6V32H7.4Z" fill="#8fcdf8"/><path d="M7.4 9L13 0.4H22.4L16.6 9Z" fill="#b9e2fc"/><path d="M16.6 9L22.4 0.4V26L16.6 32Z" fill="#66afe4"/>
<path d="M20 15.6H26V13L29.8 15.7L26 18.4V17.4H20Z" fill="#ffffff"/><path d="M20 14.6H26.4V12.4L30 15.7L26.4 19V16.8H20Z" fill="#ffffff"/></g><g transform="translate(534.6,82)"><path d="M0.4 9H14Q24 11 24.6 22V32H0.4Z" fill="#dadada"/><path d="M0.4 9L8 0.4H17.6L10.6 7.6Q12 8.6 14 9Z" fill="#f3f3f3"/>
<path d="M24.6 22L32 15.6V25L24.6 32Z" fill="#bbbbbb"/>
<path d="M10.6 7.6L17.6 0.4Q30 2 32 15.6L24.6 22Q23.6 10.6 10.6 7.6Z" fill="#8fcdf8" stroke="#2a303c" stroke-width=".7"/></g><g transform="translate(577.6,82)"><path d="M0 8H24V32H0Z" fill="#dadada"/><path d="M0 8L8 0.4H32L24 8Z" fill="#f3f3f3"/><path d="M24 8L32 0.4V24L24 32Z" fill="#bbbbbb"/>
<rect x="3.4" y="11.6" width="17.4" height="17.4" fill="#3b4453"/><path d="M3.4 11.6H12V20.4L3.4 29Z" fill="#66afe4"/><path d="M3.4 29L12 20.4H20.8V29Z" fill="#b9e2fc"/>
<rect x="3.4" y="11.6" width="17.4" height="17.4" fill="none" stroke="#2a303c" stroke-width="1"/></g><g transform="translate(620.6,82)"><path d="M0.4 15H10.4V5H25.6V22.6H17.4V32H0.4Z" fill="#8fcdf8"/><path d="M10.4 5L14.6 0.4H32L25.6 5Z" fill="#b9e2fc"/><path d="M0.4 15L4.4 10.6H10.4V15Z" fill="#b9e2fc"/>
<path d="M25.6 5L32 0.4V17.6L25.6 22.6Z" fill="#66afe4"/><path d="M17.4 22.6H22.6V27.6L17.4 32Z" fill="#66afe4"/></g><g transform="translate(663.8,82)"><path d="M2 21.6H24.4V31.4H2Z" fill="#dadada"/><path d="M24.4 21.6L30 16V25.6L24.4 31.4Z" fill="#bbbbbb"/>
<path d="M2 7H24.4V16.6H2Z" fill="#8fcdf8"/><path d="M2 7L7.6 0.6H30L24.4 7Z" fill="#b9e2fc"/><path d="M24.4 7L30 0.6V10.6L24.4 16.6Z" fill="#66afe4"/>
<path d="M0.2 19.2H25.6L31.6 11.6" stroke="#6cbaf0" stroke-width="1.3" fill="none"/></g><g transform="translate(707,82)"><path d="M16 0.2L21 9.4H17V14.8H23V10.6L32 16L23 21.4V17.2H17V22.6H21L16 32L11 22.6H15V17.2H9V21.4L0 16L9 10.6V14.8H15V9.4H11Z" fill="#ffffff"/></g><g transform="translate(750.6,82)"><path d="M0.4 9.6H8.6L18.6 29H0.4Z" fill="#dadada"/><path d="M0.4 9.6L8.4 2.4H15L8.6 9.6Z" fill="#f3f3f3"/>
<path d="M8.6 9.6L15.6 2.6L26.6 21.6L18.6 29Z" fill="#8fcdf8" stroke="#2a303c" stroke-width=".7"/>
<path d="M29.6 20L22.4 4.6" stroke="#ffffff" stroke-width="1.2"/><path d="M21 2.2L25.6 5.6L21.6 7.6Z" fill="#ffffff"/></g><g transform="translate(792.8,82)"><path d="M0.4 9.4H9.6L24.4 24V32H0.4Z" fill="#dadada"/><path d="M0.4 9.4L8.6 0.6H17.6L9.6 9.4Z" fill="#f3f3f3"/><path d="M24.4 24L32 16.4V25L24.4 32Z" fill="#bbbbbb"/>
<path d="M9.6 9.4L17.6 0.6L32 15.6L24.4 23.6Z" fill="#8fcdf8" stroke="#2a303c" stroke-width=".7"/></g><g transform="translate(846.6,82)"><path d="M4.4 12H21V31H4.4Z" fill="#dadada"/><path d="M4.4 12L12 4.6H30.4L21 12Z" fill="#f3f3f3"/><path d="M21 12L30.4 4.6V23.4L21 31Z" fill="#bbbbbb"/>
<path d="M0.4 4.4H8.4V0.6L18 6.8L8.4 13.4V9.4H0.4Z" fill="#62bdf7"/><path d="M4.4 12L8.4 9.4V13.4L6 15Z" fill="#3b4453" opacity=".0"/>
<g fill="none" stroke="#ffffff" stroke-width="2.4"><rect x="15.6" y="22.4" width="10" height="6" rx="3" transform="rotate(-38 20.6 25.4)"/><rect x="21.6" y="18" width="10" height="6" rx="3" transform="rotate(-38 26.6 21)"/></g></g><g transform="translate(890,82)"><path d="M0.6 20.6H12.6V31.6H0.6Z" fill="#dadada"/><path d="M13.4 20.6H24.4V31.6H13.4Z" fill="#e2e2e2"/><path d="M13.4 20.6L17 16.6H27.6L24.4 20.6Z" fill="#f3f3f3"/><path d="M24.4 20.6L27.6 16.6V28L24.4 31.6Z" fill="#bbbbbb"/>
<path d="M0.6 8.4H12.6V20H0.6Z" fill="#6ab1e6"/><path d="M0.6 8.4L4.4 4.4H16.4L12.6 8.4Z" fill="#8fcdf8"/><path d="M12.6 8.4L16.4 4.4V16L12.6 20Z" fill="#4f97d0"/><path d="M23.60 0.00L24.90 5.26L29.54 2.46L26.74 7.10L32.00 8.40L26.74 9.70L29.54 14.34L24.90 11.54L23.60 16.80L22.30 11.54L17.66 14.34L20.46 9.70L15.20 8.40L20.46 7.10L17.66 2.46L22.30 5.26Z" fill="#ffa800" stroke="#5a4a1a" stroke-width=".7"/></g><g transform="translate(932.8,82)"><rect x="0" y="18" width="14" height="12" fill="#dadada"/><rect x="17.2" y="2" width="14.4" height="12" fill="#8fcdf8"/><path d="M15.6 2V30" stroke="#f07f7f" stroke-width="1.3"/></g><g transform="translate(975.8,82)"><rect x="0" y="0" width="6" height="6" fill="#8fcdf8"/><rect x="0" y="7" width="6" height="6" fill="#dadada"/><rect x="7" y="7" width="6" height="6" fill="#dadada"/>
<path d="M5.6 14.4V30M5.6 17.4H13M5.6 22.4H13M5.6 27.4H13" stroke="#dadada" stroke-width="1.1" fill="none"/>
<rect x="15.2" y="8.2" width="17" height="23.6" fill="#d8d8d8"/><rect x="15.2" y="8.2" width="17" height="3.6" fill="#9a9a9a"/><rect x="16.4" y="9.4" width="2.4" height="1.1" fill="#3a3a3a"/>
<path d="M15.2 14.6H32.2M15.2 18H32.2M15.2 21.4H32.2M15.2 24.8H32.2M15.2 28.2H32.2M19.6 11.8V31.8" stroke="#8f8f8f" stroke-width=".9" fill="none"/></g><g transform="translate(1021.6,82)"><path d="M0.6 8.6L6 3.4V10.6H11.6V5L6 3.4M0.6 8.6V29.4L6 24V10.6" fill="#dadada"/><path d="M0.6 8.6L6 3.4V24L0.6 29.4Z" fill="#cfcfcf"/><path d="M6 3.6Q8.6 1.4 11.6 3.6V13.8Q8.6 15.4 6 13.8Z" fill="#e4e4e4"/><ellipse cx="8.8" cy="3.8" rx="2.8" ry="1.3" fill="#f3f3f3"/><ellipse cx="8.8" cy="3.8" rx="1.3" ry=".6" fill="#777"/>
<path d="M8.8 14V19.6" stroke="#62bdf7" stroke-width="1.1"/>
<path d="M21 5.4L26.6 10.6V29.6L21 24.6Z" fill="#cfcfcf"/><path d="M15.6 14.6Q18.2 13 21 14.6V24.6Q18.2 26.2 15.6 24.6Z" fill="#bbbbbb"/><ellipse cx="18.3" cy="14.6" rx="2.7" ry="1.3" fill="#e4e4e4"/>
<path d="M18.2 9V15" stroke="#62bdf7" stroke-width="1.1"/></g><g transform="translate(1075.8,82)"><path d="M0.4 9H20.6V29.6H0.4Z" fill="#e2e2e2"/><path d="M0.4 9L8.4 1.6H28.6L20.6 9Z" fill="#f3f3f3"/><path d="M20.6 9L28.6 1.6V22.4L20.6 29.6Z" fill="#bbbbbb"/><g transform="translate(17.8,24.2)"><path d="M-1 -1.4H16.4V2.6H-1ZM-1 5H16.4V9H-1Z" fill="#3b4453"/><rect x="0" y="0" width="15.4" height="1.6" fill="#e8e8e8"/><rect x="0" y="6.4" width="15.4" height="1.6" fill="#e8e8e8"/><rect x="2.6" y="-3.4" width="3.6" height="7" fill="#3b4453"/><rect x="3.4" y="-2.6" width="2" height="5.6" fill="#62bdf7"/><rect x="8.6" y="3.6" width="3.6" height="7" fill="#3b4453"/><rect x="9.4" y="4.2" width="2" height="5.8" fill="#e8e8e8"/></g></g><g transform="translate(1118.8,82)"><rect x="0.4" y="1.8" width="30" height="28" fill="#f6f6f6"/><rect x="0.4" y="1.8" width="30" height="5.8" fill="#a2a2a2"/><rect x="2.4" y="4" width="3.8" height="1.7" fill="#3a4250"/>
<rect x="3.8" y="11.4" width="23.2" height="15" fill="#fafafa" stroke="#5a5a5a" stroke-width=".9"/><path d="M3.8 16.4H27M3.8 21.4H27M9 11.4V26.4M14 11.4V26.4" stroke="#5a5a5a" stroke-width=".9" fill="none"/><g transform="translate(17.8,24.2)"><path d="M-1 -1.4H16.4V2.6H-1ZM-1 5H16.4V9H-1Z" fill="#3b4453"/><rect x="0" y="0" width="15.4" height="1.6" fill="#e8e8e8"/><rect x="0" y="6.4" width="15.4" height="1.6" fill="#e8e8e8"/><rect x="2.6" y="-3.4" width="3.6" height="7" fill="#3b4453"/><rect x="3.4" y="-2.6" width="2" height="5.6" fill="#62bdf7"/><rect x="8.6" y="3.6" width="3.6" height="7" fill="#3b4453"/><rect x="9.4" y="4.2" width="2" height="5.8" fill="#e8e8e8"/></g></g><g transform="translate(1201,82)"><path d="M0.6 10L8.6 1.4V28L0.6 32Z" fill="#e4e4e4"/><path d="M0.6 10L8.6 1.4H17L9.4 10Z" fill="#f3f3f3"/><path d="M0.6 10H9.4V32H0.6Z" fill="#e2e2e2"/>
<path d="M9.4 10L18.4 1.4V23.6L9.4 32Z" fill="#7ed99b"/><path d="M21.4 10L30.4 1.4V23.6L21.4 32Z" fill="#f7b581"/></g><g transform="translate(1296.4,82)"><rect x="0.2" y="17" width="28.4" height="5.8" fill="#ffd166"/><path d="M3 17V19.4M5.8 17V18.6M8.6 17V19.4M11.4 17V18.6M14.2 17V19.4M17 17V18.6M19.8 17V19.4M22.6 17V18.6M25.4 17V19.4" stroke="#3b4453" stroke-width=".9"/>
<path d="M0.6 7V16M28.2 7V16M2.4 11.4H26.4" stroke="#dadada" stroke-width="1.1" fill="none"/><path d="M1.4 11.4L5 9.4V13.4ZM27.4 11.4L23.8 9.4V13.4Z" fill="#dadada"/></g><g transform="translate(1365.8,82)"><path d="M0.4 2Q0.4 1 1.6 1H23Q24.2 1 24.2 2V8.6H0.4Z" fill="#8fcdf8"/><path d="M0.4 2Q0.4 1 1.6 1H5.6V8.6H0.4Z" fill="#b9e2fc"/><path d="M18.4 1H23Q24.2 1 24.2 2V8.6H18.4Z" fill="#66afe4"/>
<path d="M5.6 8.6H19V30Q19 31.6 17.4 31.6H7.2Q5.6 31.6 5.6 30Z" fill="#8fcdf8"/>
<path d="M5.6 13H19M5.6 15.4H19M5.6 17.8H19M5.6 20.2H19M5.6 22.6H19M5.6 25H19M5.6 27.4H19M5.6 29.6H19" stroke="#a9dbfb" stroke-width=".9"/>
<path d="M19.6 17.4H26.4V21.8H30.8V28.4H26.4V32H19.6V28.4H15.4V21.8H19.6Z" fill="#3b4453"/>
<path d="M20.6 18.2H25.4V22.8H30V27.4H25.4V32H20.6V27.4H16.2V22.8H20.6Z" fill="#5dd37f"/></g><g transform="translate(1408,82)"><rect x="0" y="1" width="29" height="29" fill="#8fc2ea"/><path d="M0 19Q5.6 11.4 9 13Q12 14.4 18.4 23.2Q21.6 18.6 23.6 19.6Q26 21 29 26.4V30H0Z" fill="#4f8fc1"/><circle cx="20.8" cy="8.8" r="3.3" fill="#fdf0a6"/></g><g transform="translate(1467.4,82)"><rect x="0.8" y="-2.8" width="37.6" height="37.4" rx="3" fill="#3c5067" stroke="#32607f" stroke-width="1.7"/>
<rect x="4.6" y="1" width="27" height="20.6" fill="none" stroke="#6fe084" stroke-width="1.4" stroke-dasharray="4.2 2.2"/>
<path d="M24 13.6L35 24.6L30 25.4L32.8 30.6L30.4 31.8L27.6 26.6L24 29.8Z" fill="#ffffff" stroke="#3c5067" stroke-width=".6"/></g></svg>
<div style="position:absolute;left:4px;top:144px;width:300px;height:25px;background:#3b4453;"></div>
<div style="position:absolute;left:32.40px;transform-origin:0 0;top:149.64px;font-size:12.6px;line-height:16.38px;color:#e8e8e8;white-space:pre;transform:scaleX(0.8601);">BROWSER</div>
<div style="position:absolute;left:40px;top:174px;width:188px;height:20px;background:#3b4453;"></div>
<div style="position:absolute;left:65px;top:174px;width:138px;height:20px;background:#212733;"></div>
<div style="position:absolute;left:40px;top:194px;width:188px;height:3px;background:rgba(225,228,234,0.55);"></div>
<div style="position:absolute;left:98.40px;transform-origin:0 0;top:177.97px;font-size:10.667px;line-height:13.87px;color:#ffffff;white-space:pre;font-weight:bold;transform:scaleX(1.0331);">batteryPACK v14</div>
<div style="position:absolute;left:58px;top:198px;width:150px;height:20px;background:#3b4453;"></div>
<div style="position:absolute;left:58px;top:218px;width:150px;height:3px;background:rgba(225,228,234,0.55);"></div>
<div style="position:absolute;left:91.00px;transform-origin:0 0;top:202.17px;font-size:10.667px;line-height:13.87px;color:#f0f0f0;white-space:pre;">Document Settings</div>
<div style="position:absolute;left:58px;top:222px;width:118px;height:20px;background:#3b4453;"></div>
<div style="position:absolute;left:58px;top:242px;width:118px;height:3px;background:rgba(225,228,234,0.55);"></div>
<div style="position:absolute;left:91.00px;transform-origin:0 0;top:226.17px;font-size:10.667px;line-height:13.87px;color:#f0f0f0;white-space:pre;transform:scaleX(1.0319);">Named Views</div>
<div style="position:absolute;left:58px;top:246px;width:126px;height:20px;background:#3b4453;"></div>
<div style="position:absolute;left:58px;top:266px;width:126px;height:3px;background:rgba(225,228,234,0.55);"></div>
<div style="position:absolute;left:91.00px;transform-origin:0 0;top:250.17px;font-size:10.667px;line-height:13.87px;color:#f0f0f0;white-space:pre;transform:scaleX(1.0119);">Selection Sets</div>
<div style="position:absolute;left:58px;top:270px;width:103px;height:20px;background:#3b4453;"></div>
<div style="position:absolute;left:58px;top:290px;width:103px;height:3px;background:rgba(225,228,234,0.55);"></div>
<div style="position:absolute;left:116.00px;transform-origin:0 0;top:274.17px;font-size:10.667px;line-height:13.87px;color:#f0f0f0;white-space:pre;transform:scaleX(0.9700);">Origin</div>
<div style="position:absolute;left:58px;top:294px;width:115px;height:20px;background:#3b4453;"></div>
<div style="position:absolute;left:58px;top:314px;width:115px;height:3px;background:rgba(225,228,234,0.55);"></div>
<div style="position:absolute;left:116.00px;transform-origin:0 0;top:298.17px;font-size:10.667px;line-height:13.87px;color:#f0f0f0;white-space:pre;transform:scaleX(1.0574);">Analysis</div>
<div style="position:absolute;left:58px;top:318px;width:107px;height:20px;background:#3b4453;"></div>
<div style="position:absolute;left:58px;top:338px;width:107px;height:3px;background:rgba(225,228,234,0.55);"></div>
<div style="position:absolute;left:116.00px;transform-origin:0 0;top:322.17px;font-size:10.667px;line-height:13.87px;color:#f0f0f0;white-space:pre;">Bodies</div>
<div style="position:absolute;left:58px;top:486px;width:119px;height:20px;background:#3b4453;"></div>
<div style="position:absolute;left:58px;top:506px;width:119px;height:3px;background:rgba(225,228,234,0.55);"></div>
<div style="position:absolute;left:116.00px;transform-origin:0 0;top:490.17px;font-size:10.667px;line-height:13.87px;color:#f0f0f0;white-space:pre;transform:scaleX(1.0211);">Sketches</div>
<div style="position:absolute;left:58px;top:510px;width:139px;height:20px;background:#3b4453;"></div>
<div style="position:absolute;left:58px;top:530px;width:139px;height:3px;background:rgba(225,228,234,0.55);"></div>
<div style="position:absolute;left:116.00px;transform-origin:0 0;top:514.17px;font-size:10.667px;line-height:13.87px;color:#f0f0f0;white-space:pre;transform:scaleX(1.0104);">Construction</div>
<div style="position:absolute;left:76px;top:342px;width:123px;height:20px;background:#3b4453;"></div>
<div style="position:absolute;left:76px;top:362px;width:123px;height:3px;background:rgba(225,228,234,0.55);"></div>
<div style="position:absolute;left:134.00px;transform-origin:0 0;top:346.17px;font-size:10.667px;line-height:13.87px;color:#f0f0f0;white-space:pre;transform:scaleX(1.0256);">orig body</div>
<div style="position:absolute;left:76px;top:366px;width:119px;height:20px;background:#3b4453;"></div>
<div style="position:absolute;left:76px;top:386px;width:119px;height:3px;background:rgba(225,228,234,0.55);"></div>
<div style="position:absolute;left:134.00px;transform-origin:0 0;top:370.17px;font-size:10.667px;line-height:13.87px;color:#f0f0f0;white-space:pre;transform:scaleX(1.0303);">exp/body</div>
<div style="position:absolute;left:76px;top:390px;width:139px;height:20px;background:#3b4453;"></div>
<div style="position:absolute;left:76px;top:410px;width:139px;height:3px;background:rgba(225,228,234,0.55);"></div>
<div style="position:absolute;left:134.00px;transform-origin:0 0;top:394.17px;font-size:10.667px;line-height:13.87px;color:#f0f0f0;white-space:pre;transform:scaleX(1.0457);">exp/body (1)</div>
<div style="position:absolute;left:76px;top:414px;width:25px;height:20px;background:#3b4453;"></div>
<div style="position:absolute;left:100.6px;top:413.4px;width:70.8px;height:21px;background:#3b5169;border:1.4px solid #1c9be0;box-sizing:border-box;border-radius:1px"></div>
<div style="position:absolute;left:76px;top:434px;width:95px;height:3px;background:rgba(225,228,234,0.55);"></div>
<div style="position:absolute;left:134.00px;transform-origin:0 0;top:418.17px;font-size:10.667px;line-height:13.87px;color:#f0f0f0;white-space:pre;transform:scaleX(1.0507);">verh</div>
<div style="position:absolute;left:76px;top:438px;width:91px;height:20px;background:#3b4453;"></div>
<div style="position:absolute;left:76px;top:458px;width:91px;height:3px;background:rgba(225,228,234,0.55);"></div>
<div style="position:absolute;left:134.00px;transform-origin:0 0;top:442.17px;font-size:10.667px;line-height:13.87px;color:#f0f0f0;white-space:pre;transform:scaleX(1.0221);">niz3</div>
<div style="position:absolute;left:76px;top:462px;width:91px;height:20px;background:#3b4453;"></div>
<div style="position:absolute;left:76px;top:482px;width:91px;height:3px;background:rgba(225,228,234,0.55);"></div>
<div style="position:absolute;left:134.00px;transform-origin:0 0;top:466.17px;font-size:10.667px;line-height:13.87px;color:#f0f0f0;white-space:pre;transform:scaleX(1.0221);">niz4</div>
<svg style="position:absolute;left:0px;top:0px;" width="320" height="560"><path d="M14.2 153.6v5.4l-3.6-2.7zM18.4 153.6v5.4l-3.6-2.7z" fill="#707785"/><rect x="283.4" y="155.4" width="7.6" height="1.6" fill="#9a9fab"/><path d="M21.6 180.4l4.4 4.2l4.4-4.2" fill="none" stroke="#ffffff" stroke-width="3.6" stroke-linecap="round" stroke-linejoin="round"/><path d="M21.6 180.4l4.4 4.2l4.4-4.2" fill="none" stroke="#474747" stroke-width="1.5"/><g transform="translate(43.4,178)"><path d="M0 6Q8 -3 16 6Q8 15 0 6Z" fill="#e4e4e4"/><circle cx="8" cy="6" r="3.3" fill="#8d9199"/><circle cx="8" cy="6" r="1.9" fill="#c8c8c8"/></g><g transform="translate(69,177)"><path d="M0 3.6L10.4 3.6L10.4 14L0 14Z" fill="#8fcdf8"/><path d="M0 3.6L3.4 0H13.8L10.4 3.6Z" fill="#c1e4fb"/><path d="M10.4 3.6L13.8 0V10.4L10.4 14Z" fill="#62ace0"/></g><circle cx="213.6" cy="184" r="4.6" fill="none" stroke="#ffffff" stroke-width="3"/><path d="M41.4 203.6l4.4 4.3l-4.4 4.3" fill="none" stroke="#ffffff" stroke-width="3.6" stroke-linecap="round" stroke-linejoin="round"/><path d="M41.4 203.6l4.4 4.3l-4.4 4.3" fill="none" stroke="#474747" stroke-width="1.5"/><g transform="translate(61,200) scale(1.0)"><path d="M15.96 7.22L15.96 8.78L13.55 9.68L13.12 10.73L14.18 13.08L13.08 14.18L10.73 13.12L9.68 13.55L8.78 15.96L7.22 15.96L6.32 13.55L5.27 13.12L2.92 14.18L1.82 13.08L2.88 10.73L2.45 9.68L0.04 8.78L0.04 7.22L2.45 6.32L2.88 5.27L1.82 2.92L2.92 1.82L5.27 2.88L6.32 2.45L7.22 0.04L8.78 0.04L9.68 2.45L10.73 2.88L13.08 1.82L14.18 2.92L13.12 5.27L13.55 6.32Z" fill="#9a9fab"/><circle cx="8" cy="8" r="2.9" fill="#3b4453"/></g><path d="M41.4 227.6l4.4 4.3l-4.4 4.3" fill="none" stroke="#ffffff" stroke-width="3.6" stroke-linecap="round" stroke-linejoin="round"/><path d="M41.4 227.6l4.4 4.3l-4.4 4.3" fill="none" stroke="#474747" stroke-width="1.5"/><g transform="translate(61,225)"><path d="M0 0.4H5L6.4 2.6H0Z" fill="#bdbdbd"/><rect x="0" y="2.4" width="16" height="11.6" fill="#d6d6d6"/></g><path d="M41.4 251.6l4.4 4.3l-4.4 4.3" fill="none" stroke="#ffffff" stroke-width="3.6" stroke-linecap="round" stroke-linejoin="round"/><path d="M41.4 251.6l4.4 4.3l-4.4 4.3" fill="none" stroke="#474747" stroke-width="1.5"/><g transform="translate(61,249)"><path d="M0 0.4H5L6.4 2.6H0Z" fill="#bdbdbd"/><rect x="0" y="2.4" width="16" height="11.6" fill="#d6d6d6"/></g><path d="M41.4 275.6l4.4 4.3l-4.4 4.3" fill="none" stroke="#ffffff" stroke-width="3.6" stroke-linecap="round" stroke-linejoin="round"/><path d="M41.4 275.6l4.4 4.3l-4.4 4.3" fill="none" stroke="#474747" stroke-width="1.5"/><g transform="translate(61,274)" fill="none" stroke="#b9bcc3" stroke-width="1.1"><path d="M0.6 6Q8 -2 15.4 6Q8 14 0.6 6Z"/><circle cx="8" cy="6" r="3"/><path d="M2.4 -0.6L14 12.6"/></g><g transform="translate(86,273)"><path d="M0 0.4H5L6.4 2.6H0Z" fill="#bdbdbd"/><rect x="0" y="2.4" width="16" height="11.6" fill="#d6d6d6"/></g><path d="M41.4 299.6l4.4 4.3l-4.4 4.3" fill="none" stroke="#ffffff" stroke-width="3.6" stroke-linecap="round" stroke-linejoin="round"/><path d="M41.4 299.6l4.4 4.3l-4.4 4.3" fill="none" stroke="#474747" stroke-width="1.5"/><g transform="translate(61,298)" fill="none" stroke="#b9bcc3" stroke-width="1.1"><path d="M0.6 6Q8 -2 15.4 6Q8 14 0.6 6Z"/><circle cx="8" cy="6" r="3"/><path d="M2.4 -0.6L14 12.6"/></g><g transform="translate(86,297)"><path d="M0 0.4H5L6.4 2.6H0Z" fill="#bdbdbd"/><rect x="0" y="2.4" width="16" height="11.6" fill="#d6d6d6"/></g><path d="M39.6 324.4l4.4 4.2l4.4-4.2" fill="none" stroke="#ffffff" stroke-width="3.6" stroke-linecap="round" stroke-linejoin="round"/><path d="M39.6 324.4l4.4 4.2l4.4-4.2" fill="none" stroke="#474747" stroke-width="1.5"/><g transform="translate(61,322)"><path d="M0 6Q8 -3 16 6Q8 15 0 6Z" fill="#e4e4e4"/><circle cx="8" cy="6" r="3.3" fill="#8d9199"/><circle cx="8" cy="6" r="1.9" fill="#c8c8c8"/></g><g transform="translate(86,321)"><path d="M0 0.4H5L6.4 2.6H0Z" fill="#bdbdbd"/><rect x="0" y="2.4" width="16" height="11.6" fill="#d6d6d6"/></g><path d="M41.4 491.6l4.4 4.3l-4.4 4.3" fill="none" stroke="#ffffff" stroke-width="3.6" stroke-linecap="round" stroke-linejoin="round"/><path d="M41.4 491.6l4.4 4.3l-4.4 4.3" fill="none" stroke="#474747" stroke-width="1.5"/><g transform="translate(61,490)"><path d="M0 6Q8 -3 16 6Q8 15 0 6Z" fill="#e4e4e4"/><circle cx="8" cy="6" r="3.3" fill="#8d9199"/><circle cx="8" cy="6" r="1.9" fill="#c8c8c8"/></g><g transform="translate(86,489)"><path d="M0 0.4H5L6.4 2.6H0Z" fill="#bdbdbd"/><rect x="0" y="2.4" width="16" height="11.6" fill="#d6d6d6"/></g><path d="M41.4 515.6l4.4 4.3l-4.4 4.3" fill="none" stroke="#ffffff" stroke-width="3.6" stroke-linecap="round" stroke-linejoin="round"/><path d="M41.4 515.6l4.4 4.3l-4.4 4.3" fill="none" stroke="#474747" stroke-width="1.5"/><g transform="translate(61,514)"><path d="M0 6Q8 -3 16 6Q8 15 0 6Z" fill="#e4e4e4"/><circle cx="8" cy="6" r="3.3" fill="#8d9199"/><circle cx="8" cy="6" r="1.9" fill="#c8c8c8"/></g><g transform="translate(86,513)"><path d="M0 0.4H5L6.4 2.6H0Z" fill="#bdbdbd"/><rect x="0" y="2.4" width="16" height="11.6" fill="#d6d6d6"/></g><g transform="translate(79,346)" fill="none" stroke="#b9bcc3" stroke-width="1.1"><path d="M0.6 6Q8 -2 15.4 6Q8 14 0.6 6Z"/><circle cx="8" cy="6" r="3"/><path d="M2.4 -0.6L14 12.6"/></g><g transform="translate(104.6,344.6)"><path d="M0 3V12Q0 15 7.2 15Q14.4 15 14.4 12V3Z" fill="#8fcdf8"/><ellipse cx="7.2" cy="3" rx="7.2" ry="2.9" fill="#b9e1fb"/></g><g transform="translate(79,370)" fill="none" stroke="#b9bcc3" stroke-width="1.1"><path d="M0.6 6Q8 -2 15.4 6Q8 14 0.6 6Z"/><circle cx="8" cy="6" r="3"/><path d="M2.4 -0.6L14 12.6"/></g><g transform="translate(104.6,368.6)"><path d="M0 3V12Q0 15 7.2 15Q14.4 15 14.4 12V3Z" fill="#8fcdf8"/><ellipse cx="7.2" cy="3" rx="7.2" ry="2.9" fill="#b9e1fb"/></g><g transform="translate(79,394)" fill="none" stroke="#b9bcc3" stroke-width="1.1"><path d="M0.6 6Q8 -2 15.4 6Q8 14 0.6 6Z"/><circle cx="8" cy="6" r="3"/><path d="M2.4 -0.6L14 12.6"/></g><g transform="translate(104.6,392.6)"><path d="M0 3V12Q0 15 7.2 15Q14.4 15 14.4 12V3Z" fill="#8fcdf8"/><ellipse cx="7.2" cy="3" rx="7.2" ry="2.9" fill="#b9e1fb"/></g><g transform="translate(79,418)"><path d="M0 6Q8 -3 16 6Q8 15 0 6Z" fill="#e4e4e4"/><circle cx="8" cy="6" r="3.3" fill="#8d9199"/><circle cx="8" cy="6" r="1.9" fill="#c8c8c8"/></g><g transform="translate(104.6,416.6)"><path d="M0 3V12Q0 15 7.2 15Q14.4 15 14.4 12V3Z" fill="#8fcdf8"/><ellipse cx="7.2" cy="3" rx="7.2" ry="2.9" fill="#b9e1fb"/></g><g transform="translate(79,442)" fill="none" stroke="#b9bcc3" stroke-width="1.1"><path d="M0.6 6Q8 -2 15.4 6Q8 14 0.6 6Z"/><circle cx="8" cy="6" r="3"/><path d="M2.4 -0.6L14 12.6"/></g><g transform="translate(104.6,440.6)"><path d="M0 3V12Q0 15 7.2 15Q14.4 15 14.4 12V3Z" fill="#8fcdf8"/><ellipse cx="7.2" cy="3" rx="7.2" ry="2.9" fill="#b9e1fb"/></g><g transform="translate(79,466)" fill="none" stroke="#b9bcc3" stroke-width="1.1"><path d="M0.6 6Q8 -2 15.4 6Q8 14 0.6 6Z"/><circle cx="8" cy="6" r="3"/><path d="M2.4 -0.6L14 12.6"/></g><g transform="translate(104.6,464.6)"><path d="M0 3V12Q0 15 7.2 15Q14.4 15 14.4 12V3Z" fill="#8fcdf8"/><ellipse cx="7.2" cy="3" rx="7.2" ry="2.9" fill="#b9e1fb"/></g></svg>
<div style="position:absolute;left:4px;top:1313px;width:300px;height:25px;background:#3b4453;"></div>
<div style="position:absolute;left:32.40px;transform-origin:0 0;top:1318.64px;font-size:12.6px;line-height:16.38px;color:#e8e8e8;white-space:pre;transform:scaleX(0.8654);">COMMENTS</div>
<svg style="position:absolute;left:280px;top:1318px;" width="14" height="14"><path d="M3 7H11M7 3V11" stroke="#c8cad0" stroke-width="1.5"/></svg>
<div style="position:absolute;left:1161px;top:1312px;width:239px;height:24px;background:#3b4453;"></div>
<svg style="position:absolute;left:1161px;top:1312px;" width="239" height="24"><g fill="none" stroke="#e6e6e6" stroke-width="1.1"><ellipse cx="10.6" cy="11.6" rx="4" ry="8" transform="rotate(-12 10.6 11.6)"/><path d="M17.6 11.2Q11 6 5 9.4M17.6 11.6Q11 17 5 13"/><path d="M5.8 8.4L3 11.4L5.8 14.2"/></g><circle cx="10.8" cy="11.4" r="1.9" fill="#62bdf7"/><path d="M25 10.2h6l-3 4z" fill="#9a9fab"/><path d="M38.4 9.4L43.6 4.4L44.4 7.4L49.4 5.4L50 9.4Z" fill="#e6e6e6" opacity=".85"/><rect x="38" y="8.6" width="15.2" height="10.4" fill="#e6e6e6"/><rect x="40.4" y="11.4" width="10.4" height="5" fill="#62bdf7" stroke="#3b4453" stroke-width=".8"/><path d="M66.6 20L63 13.4Q62.6 12 64 12L66.6 14.4L65.4 6.4Q65.4 5 66.8 5.2L68.6 11L68.6 4Q69.4 3 70.4 4L71 11L72.6 4.6Q73.6 3.8 74.4 4.8L73.6 11.6L76 7Q77.2 6.6 77.6 7.8L75.4 14.6L74.6 20Z" fill="#e6e6e6"/><circle cx="95.4" cy="10.4" r="4.6" fill="#5b6373" stroke="#e6e6e6" stroke-width="1.2"/><path d="M98.8 14L103 18.6" stroke="#e3a75a" stroke-width="1.6"/><path d="M101.4 6.4H106M103.7 4V8.8M101.4 10.6H106" stroke="#e6e6e6" stroke-width="1"/><rect x="115.6" y="3.6" width="16" height="16" fill="none" stroke="#e6e6e6" stroke-width="1.1" stroke-dasharray="2.4 1.4"/><circle cx="122.6" cy="10.4" r="6.2" fill="#5b6373" stroke="#e6e6e6" stroke-width="1.1"/><path d="M127 15.4L131.6 20" stroke="#c98f4a" stroke-width="1.7"/><path d="M137 10.2h6l-3 4z" fill="#9a9fab"/><rect x="149.6" y="5.8" width="15.4" height="10.6" fill="#b3b3b3" stroke="#e6e6e6" stroke-width="1.2"/><path d="M155.4 16.6V18.4M159.4 16.6V18.4M152.6 18.8H162" stroke="#e6e6e6" stroke-width="1.2"/><path d="M168 10.2h6l-3 4z" fill="#9a9fab"/><rect x="180.4" y="3.6" width="13.4" height="13.4" fill="#5b6373" stroke="#e6e6e6" stroke-width="1.1"/><path d="M184.9 3.6V17M189.4 3.6V17M180.4 8.1H193.8M180.4 12.6H193.8" stroke="#e6e6e6" stroke-width="1.1"/><path d="M199 10.2h6l-3 4z" fill="#9a9fab"/><rect x="211.6" y="4.4" width="7" height="6.6" fill="#bdbdbd"/><rect x="213.2" y="6.2" width="3.8" height="3" fill="#d9d9d9" stroke="#9a9a9a" stroke-width=".5"/><rect x="219.8" y="4.4" width="7" height="6.6" fill="#bdbdbd"/><rect x="221.4" y="6.2" width="3.8" height="3" fill="#d9d9d9" stroke="#9a9a9a" stroke-width=".5"/><rect x="211.6" y="12.2" width="7" height="6.6" fill="#bdbdbd"/><rect x="213.2" y="14.0" width="3.8" height="3" fill="#d9d9d9" stroke="#9a9a9a" stroke-width=".5"/><rect x="219.8" y="12.2" width="7" height="6.6" fill="#bdbdbd"/><rect x="221.4" y="14.0" width="3.8" height="3" fill="#d9d9d9" stroke="#9a9a9a" stroke-width=".5"/><path d="M230 10.2h6l-3 4z" fill="#9a9fab"/></svg>
<div style="position:absolute;left:0px;top:1342px;width:2560px;height:51px;background:#3b4453;"></div>
<svg style="position:absolute;left:0px;top:1342px;" width="2560" height="51"><defs><g id="tlS"><path d="M3.6 1.5H11.6M2 3.6V11.6M14 3.6V8.4M3.6 13.5H8" stroke="#f0f0f0" stroke-width="1" fill="none"/>
<rect x="0.2" y="0.2" width="2.7" height="2.7" fill="#6cc4fa"/><rect x="12.2" y="0.2" width="2.7" height="2.7" fill="#6cc4fa"/><rect x="0.2" y="12.2" width="2.7" height="2.7" fill="#6cc4fa"/>
<path d="M7.6 15.6L8.8 12.6L13.6 8L16 10.4L11.2 15Z" fill="#f2c75c"/><path d="M13.6 8L14.6 7Q15.6 6.4 16.4 7.2L17 7.8Q17.6 8.8 16.8 9.6L16 10.4Z" fill="#e8575a"/><path d="M7.6 15.6L8.8 12.6L11.2 15Z" fill="#e4e4e4"/><path d="M7.6 15.6L8 14.4L8.8 15.2Z" fill="#555"/></g><g id="tlE"><path d="M1 12.6H9.6V15.2H1Z" fill="#e6e6e6"/><path d="M9.6 12.6L12.6 9.8V12.4L9.6 15.2Z" fill="#b5b5b5"/>
<path d="M1 3.6H9.6V12.4H1Z" fill="#8fcdf8"/><path d="M1 3.6L4 0.6H12.6L9.6 3.6Z" fill="#c1e4fb"/><path d="M9.6 3.6L12.6 0.6V9.6L9.6 12.4Z" fill="#62ace0"/>
<path d="M15 13V2.4" stroke="#fff" stroke-width="1.1"/><path d="M13.4 4.6L15 1L16.6 4.6Z" fill="#fff"/></g><g id="tlR"><path d="M0.6 1L4.4 4.8M4.4 1L0.6 4.8" stroke="#e8323c" stroke-width="1.7"/>
<path d="M5.6 8.2H12.2V15H5.6Z" fill="#a6d6f2" stroke="#5a9fd6" stroke-width=".7"/><path d="M5.6 8.2L8.2 5.8H14.8L12.2 8.2Z" fill="#f4f8fb"/><path d="M12.2 8.2L14.8 5.8V12.6L12.2 15Z" fill="#d9dee2"/></g><g id="tlF"><g transform="scale(.5)"><path d="M0.4 9H14Q24 11 24.6 22V32H0.4Z" fill="#dadada"/><path d="M0.4 9L8 0.4H17.6L10.6 7.6Q12 8.6 14 9Z" fill="#f3f3f3"/>
<path d="M24.6 22L32 15.6V25L24.6 32Z" fill="#bbbbbb"/>
<path d="M10.6 7.6L17.6 0.4Q30 2 32 15.6L24.6 22Q23.6 10.6 10.6 7.6Z" fill="#8fcdf8" stroke="#2a303c" stroke-width=".7"/></g></g><g id="tlP"><path d="M1 5.4L4.4 2.4V13L1 16Z" fill="#e4e4e4"/><path d="M4.4 2.4L9 0.8V11.6L4.4 16L4.4 13Z" fill="#7fdc98"/><path d="M4.4 2.4L7 1.4V13.4L4.4 16Z" fill="#5fc47c"/>
<path d="M11 5.6L16 1V11.4L11 16Z" fill="#f7b682"/></g><g id="tlA"><path d="M8.6 6.4L17 1.6V9.4L8.6 14.2Z" fill="#f7b682"/><path d="M2.4 10.6L13.4 3.6Q15.8 3.4 16 6L5 13Z" fill="#7fdc98" stroke="#3f9c58" stroke-width=".6"/>
<circle cx="3.8" cy="12.4" r="3.2" fill="#eee" stroke="#3f9c58" stroke-width="1"/><circle cx="3.8" cy="12.4" r="1.2" fill="#888"/></g><g id="tlD"><g transform="scale(.5)"><path d="M0.4 9.6H8.6L18.6 29H0.4Z" fill="#dadada"/><path d="M0.4 9.6L8.4 2.4H15L8.6 9.6Z" fill="#f3f3f3"/>
<path d="M8.6 9.6L15.6 2.6L26.6 21.6L18.6 29Z" fill="#8fcdf8" stroke="#2a303c" stroke-width=".7"/>
<path d="M29.6 20L22.4 4.6" stroke="#ffffff" stroke-width="1.2"/><path d="M21 2.2L25.6 5.6L21.6 7.6Z" fill="#ffffff"/></g></g><g id="tlMV"><path d="M1 9.6H6.6V16H1Z" fill="#d6d6d6"/><path d="M9 0.8L16.6 7.6L9 14.6L3 7.6Z" fill="#f7b682"/><path d="M7 10.6L11.4 5M11.4 5L8.6 5.8M11.4 5L11 8" stroke="#2f9c4e" stroke-width="1.3" fill="none"/><path d="M8 14V9" stroke="#2f9c4e" stroke-width="1"/></g><g id="tlO"><g transform="scale(.5)"><path d="M2 21.6H24.4V31.4H2Z" fill="#dadada"/><path d="M24.4 21.6L30 16V25.6L24.4 31.4Z" fill="#bbbbbb"/>
<path d="M2 7H24.4V16.6H2Z" fill="#8fcdf8"/><path d="M2 7L7.6 0.6H30L24.4 7Z" fill="#b9e2fc"/><path d="M24.4 7L30 0.6V10.6L24.4 16.6Z" fill="#66afe4"/>
<path d="M0.2 19.2H25.6L31.6 11.6" stroke="#6cbaf0" stroke-width="1.3" fill="none"/></g></g><g id="tlC"><g transform="scale(.5)"><path d="M0.4 15H10.4V5H25.6V22.6H17.4V32H0.4Z" fill="#8fcdf8"/><path d="M10.4 5L14.6 0.4H32L25.6 5Z" fill="#b9e2fc"/><path d="M0.4 15L4.4 10.6H10.4V15Z" fill="#b9e2fc"/>
<path d="M25.6 5L32 0.4V17.6L25.6 22.6Z" fill="#66afe4"/><path d="M17.4 22.6H22.6V27.6L17.4 32Z" fill="#66afe4"/></g></g><g id="tlH"><g transform="scale(.5)"><path d="M0.4 9.4H9.6L24.4 24V32H0.4Z" fill="#dadada"/><path d="M0.4 9.4L8.6 0.6H17.6L9.6 9.4Z" fill="#f3f3f3"/><path d="M24.4 24L32 16.4V25L24.4 32Z" fill="#bbbbbb"/>
<path d="M9.6 9.4L17.6 0.6L32 15.6L24.4 23.6Z" fill="#8fcdf8" stroke="#2a303c" stroke-width=".7"/></g></g><g id="tlB"><g transform="scale(.5)"><path d="M0 7H27V32H0Z" fill="#e6e6e6"/><path d="M0 7L6 0.4H32L27 7Z" fill="#f3f3f3"/><path d="M27 7L32 0.4V26L27 32Z" fill="#bbbbbb"/>
<rect x="3.6" y="9.8" width="20" height="19" fill="#d8d8d8"/><path d="M3.6 25.6H23.6V28.8H3.6Z" fill="#f6f6f6"/>
<path d="M3.6 16H23.6V21.6H3.6Z" fill="#8fcdf8"/><path d="M11.8 9.8H17.4V28.8H11.8Z" fill="#8fcdf8"/><path d="M14.8 9.8H17.4V16H14.8ZM14.8 21.6H17.4V28.8L14.8 25.6Z" fill="#66afe4"/><path d="M3.6 16H11.8V17.8H3.6ZM17.4 16H23.6V17.8H17.4Z" fill="#b9e2fc"/>
<rect x="3.6" y="9.8" width="20" height="19" fill="none" stroke="#2a303c" stroke-width="1"/></g></g></defs><g fill="#9a9fab"><rect x="11" y="23" width="2" height="12.4"/><path d="M22 23V35.4L13.6 29.2Z"/><path d="M44 23.6V35L35.4 29.3Z"/><rect x="45.6" y="26" width="2.2" height="6.4"/><path d="M61.4 21.4V37L73 29.2Z"/><rect x="85" y="26" width="2.2" height="6.4"/><path d="M88.8 23.6V35L97.4 29.3Z"/><path d="M111 23V35.4L119.4 29.2Z"/><rect x="120" y="23" width="2" height="12.4"/></g><path d="M137.4 41H140.6M142.4 41H145.6" stroke="#5b6678" stroke-width="1.6"/><path d="M147.6 41H2483" stroke="#5b6678" stroke-width="1.6"/><path d="M155 35.6V41M179 35.6V41M203 35.6V41M227 35.6V41M251 35.6V41M275 35.6V41M299 35.6V41M323 35.6V41M347 35.6V41M371 35.6V41M395 35.6V41M419 35.6V41M443 35.6V41M467 35.6V41M491 35.6V41M515 35.6V41M539 35.6V41M563 35.6V41M587 35.6V41M611 35.6V41M635 35.6V41M659 35.6V41M683 35.6V41M707 35.6V41M731 35.6V41M755 35.6V41M779 35.6V41M803 35.6V41M827 35.6V41M851 35.6V41M875 35.6V41M899 35.6V41M923 35.6V41M947 35.6V41M971 35.6V41M995 35.6V41M1019 35.6V41M1043 35.6V41M1067 35.6V41M1091 35.6V41M1115 35.6V41M1139 35.6V41M1163 35.6V41M1187 35.6V41M1211 35.6V41M1235 35.6V41M1259 35.6V41M1283 35.6V41M1307 35.6V41M1331 35.6V41M1355 35.6V41M1379 35.6V41M1403 35.6V41M1427 35.6V41M1451 35.6V41M1475 35.6V41M1499 35.6V41M1523 35.6V41M1547 35.6V41M1571 35.6V41M1595 35.6V41M1619 35.6V41M1643 35.6V41M1667 35.6V41M1691 35.6V41M1715 35.6V41M1739 35.6V41M1763 35.6V41M1787 35.6V41M1811 35.6V41M1835 35.6V41M1859 35.6V41M1883 35.6V41M1907 35.6V41M1931 35.6V41M1955 35.6V41M1979 35.6V41M2003 35.6V41M2027 35.6V41M2051 35.6V41M2075 35.6V41M2099 35.6V41M2123 35.6V41M2147 35.6V41M2171 35.6V41M2195 35.6V41M2219 35.6V41M2243 35.6V41M2267 35.6V41M2291 35.6V41M2315 35.6V41M2339 35.6V41M2363 35.6V41M2387 35.6V41M2411 35.6V41M2435 35.6V41M2459 35.6V41M2483 35.6V41" stroke="#5b6678" stroke-width="1.4" fill="none"/><use href="#tlS" x="145.5" y="16"/><use href="#tlR" x="169.5" y="16"/><use href="#tlR" x="193.5" y="16"/><use href="#tlS" x="217.5" y="16"/><use href="#tlE" x="241.5" y="16"/><use href="#tlS" x="265.5" y="16"/><use href="#tlE" x="289.5" y="16"/><use href="#tlE" x="313.5" y="16"/><use href="#tlE" x="337.5" y="16"/><use href="#tlF" x="361.5" y="16"/><use href="#tlE" x="385.5" y="16"/><use href="#tlS" x="409.5" y="16"/><use href="#tlE" x="433.5" y="16"/><use href="#tlS" x="457.5" y="16"/><use href="#tlE" x="481.5" y="16"/><use href="#tlS" x="505.5" y="16"/><use href="#tlE" x="529.5" y="16"/><use href="#tlE" x="553.5" y="16"/><use href="#tlE" x="577.5" y="16"/><use href="#tlS" x="601.5" y="16"/><use href="#tlE" x="625.5" y="16"/><use href="#tlS" x="649.5" y="16"/><use href="#tlP" x="673.5" y="16"/><use href="#tlS" x="697.5" y="16"/><use href="#tlA" x="721.5" y="16"/><use href="#tlS" x="745.5" y="16"/><use href="#tlE" x="769.5" y="16"/><use href="#tlR" x="793.5" y="16"/><use href="#tlA" x="817.5" y="16"/><use href="#tlS" x="841.5" y="16"/><use href="#tlE" x="865.5" y="16"/><use href="#tlR" x="889.5" y="16"/><use href="#tlS" x="913.5" y="16"/><use href="#tlE" x="937.5" y="16"/><use href="#tlR" x="961.5" y="16"/><use href="#tlR" x="985.5" y="16"/><use href="#tlS" x="1009.5" y="16"/><use href="#tlE" x="1033.5" y="16"/><use href="#tlF" x="1057.5" y="16"/><use href="#tlE" x="1081.5" y="16"/><use href="#tlR" x="1105.5" y="16"/><use href="#tlS" x="1129.5" y="16"/><use href="#tlE" x="1153.5" y="16"/><use href="#tlS" x="1177.5" y="16"/><use href="#tlE" x="1201.5" y="16"/><use href="#tlR" x="1225.5" y="16"/><use href="#tlD" x="1249.5" y="16"/><use href="#tlR" x="1273.5" y="16"/><use href="#tlR" x="1297.5" y="16"/><use href="#tlF" x="1321.5" y="16"/><use href="#tlF" x="1345.5" y="16"/><use href="#tlS" x="1369.5" y="16"/><use href="#tlMV" x="1393.5" y="16"/><use href="#tlO" x="1417.5" y="16"/><use href="#tlR" x="1441.5" y="16"/><use href="#tlR" x="1465.5" y="16"/><use href="#tlR" x="1489.5" y="16"/><use href="#tlR" x="1513.5" y="16"/><use href="#tlR" x="1537.5" y="16"/><use href="#tlR" x="1561.5" y="16"/><use href="#tlR" x="1585.5" y="16"/><use href="#tlR" x="1609.5" y="16"/><use href="#tlC" x="1633.5" y="16"/><use href="#tlH" x="1657.5" y="16"/><use href="#tlH" x="1681.5" y="16"/><use href="#tlS" x="1705.5" y="16"/><use href="#tlE" x="1729.5" y="16"/><use href="#tlS" x="1753.5" y="16"/><use href="#tlE" x="1777.5" y="16"/><use href="#tlS" x="1801.5" y="16"/><use href="#tlE" x="1825.5" y="16"/><use href="#tlS" x="1849.5" y="16"/><use href="#tlB" x="1873.5" y="16"/><use href="#tlS" x="1897.5" y="16"/><use href="#tlB" x="1921.5" y="16"/><use href="#tlS" x="1945.5" y="16"/><use href="#tlE" x="1969.5" y="16"/><use href="#tlS" x="1993.5" y="16"/><use href="#tlE" x="2017.5" y="16"/><use href="#tlR" x="2041.5" y="16"/><use href="#tlF" x="2065.5" y="16"/><use href="#tlR" x="2089.5" y="16"/><use href="#tlF" x="2113.5" y="16"/><use href="#tlS" x="2137.5" y="16"/><use href="#tlE" x="2161.5" y="16"/><use href="#tlS" x="2185.5" y="16"/><use href="#tlE" x="2209.5" y="16"/><use href="#tlR" x="2233.5" y="16"/><use href="#tlF" x="2257.5" y="16"/><use href="#tlR" x="2281.5" y="16"/><use href="#tlC" x="2305.5" y="16"/><use href="#tlS" x="2329.5" y="16"/><use href="#tlE" x="2353.5" y="16"/><use href="#tlR" x="2377.5" y="16"/><use href="#tlR" x="2401.5" y="16"/><use href="#tlE" x="2425.5" y="16"/><use href="#tlS" x="2449.5" y="16"/><use href="#tlE" x="2473.5" y="16"/><path d="M2487.6 17.4H2500.4L2495.4 27V42H2493V27Z" fill="#c9ccd2"/><rect x="2499" y="3" width="56" height="5" rx="2.5" fill="#4a5466"/></svg>
<svg style="position:absolute;left:2531px;top:1363px;" width="16" height="16"><g transform="translate(0,0) scale(1.0)"><path d="M15.96 7.22L15.96 8.78L13.55 9.68L13.12 10.73L14.18 13.08L13.08 14.18L10.73 13.12L9.68 13.55L8.78 15.96L7.22 15.96L6.32 13.55L5.27 13.12L2.92 14.18L1.82 13.08L2.88 10.73L2.45 9.68L0.04 8.78L0.04 7.22L2.45 6.32L2.88 5.27L1.82 2.92L2.92 1.82L5.27 2.88L6.32 2.45L7.22 0.04L8.78 0.04L9.68 2.45L10.73 2.88L13.08 1.82L14.18 2.92L13.12 5.27L13.55 6.32Z" fill="#9a9fab"/><circle cx="8" cy="8" r="2.9" fill="#3b4453"/></g></svg>
<div style="position:absolute;left:0;top:1393px;width:2560px;height:47px;background:linear-gradient(90deg,#1c1c1c 0%,#1c1c1c 45%,#211e1d 70%,#221f1d 85%,#1f1e1e 100%)"></div>
<div style="position:absolute;left:51.00px;transform-origin:0 0;top:1400.24px;font-size:11.6px;line-height:15.08px;color:#ffffff;white-space:pre;transform:scaleX(0.9452);-webkit-text-stroke:.25px #fff;">4°C</div>
<div style="position:absolute;left:51.00px;transform-origin:0 0;top:1416.24px;font-size:11.6px;line-height:15.08px;color:#e4e4e4;white-space:pre;transform:scaleX(1.0424);-webkit-text-stroke:.25px #e4e4e4;">Облачно</div>
<svg style="position:absolute;left:0px;top:1393px;" width="2560" height="47"><defs><linearGradient id="cl" x1="0" y1="0" x2="0" y2="1"><stop offset="0" stop-color="#eef3fc"/><stop offset=".6" stop-color="#c5d6f5"/><stop offset="1" stop-color="#86a8ee"/></linearGradient></defs><path d="M24 27.8Q19 27.6 19 23.6Q19.2 20 23.2 19.8Q24.4 13.6 30.4 13.2Q35.6 13.4 37 18.8Q43 18.8 43 23.6Q43 27.6 38.6 27.8Z" fill="url(#cl)"/><defs><linearGradient id="wl" x1="0" y1="0" x2="1" y2="1"><stop offset="0" stop-color="#6fe0fb"/><stop offset="1" stop-color="#1a9bf0"/></linearGradient></defs><g fill="url(#wl)"><rect x="1070.6" y="11.6" width="11.4" height="11.2"/><rect x="1083.2" y="11.6" width="11.4" height="11.2"/><rect x="1070.6" y="24" width="11.4" height="11.2"/><rect x="1083.2" y="24" width="11.4" height="11.2"/></g><circle cx="1125" cy="21.6" r="8" fill="#2b2b2d" stroke="#f2f2f2" stroke-width="2.6"/><path d="M1130.8 27.6L1137 34" stroke="#f2f2f2" stroke-width="3" stroke-linecap="round"/><rect x="1159.6" y="19.6" width="16.6" height="15.4" rx="1.6" fill="#6b6b6d"/><rect x="1165.6" y="12.6" width="17" height="15.4" rx="1.6" fill="#f4f4f4"/><rect x="1165.6" y="19.6" width="10.6" height="8.4" fill="#bdbdbf"/><path d="M1203 13.6Q1203 12 1204.6 12H1211L1213 14.6H1225.4Q1227 14.6 1227 16.2V33.4Q1227 35 1225.4 35H1204.6Q1203 35 1203 33.4Z" fill="#f5b71d"/><path d="M1203 18H1227V33.4Q1227 35 1225.4 35H1204.6Q1203 35 1203 33.4Z" fill="#fbd75b"/><path d="M1208.6 35V30.6Q1208.6 28.6 1210.6 28.6H1219.6Q1221.6 28.6 1221.6 30.6V35Z" fill="#1a7fd6"/><path d="M1251.6 17V14.6Q1251.6 12 1254.2 12H1263Q1265.6 12 1265.6 14.6V17" fill="none" stroke="#2aa8ea" stroke-width="1.8"/><path d="M1247.4 16.6H1269.8V32.6Q1269.8 35.2 1267.2 35.2H1250Q1247.4 35.2 1247.4 32.6Z" fill="#f3f3f3"/><rect x="1254" y="20.6" width="4" height="4" fill="#f25022"/><rect x="1259" y="20.6" width="4" height="4" fill="#7fba00"/><rect x="1254" y="25.6" width="4" height="4" fill="#00a4ef"/><rect x="1259" y="25.6" width="4" height="4" fill="#ffb900"/><ellipse cx="1302.6" cy="23" rx="11" ry="11.6" fill="#e8121f"/><ellipse cx="1302.6" cy="23" rx="4.6" ry="8.6" fill="#1c1b1c"/><rect x="1298.4" y="39" width="8" height="2.4" rx="1.2" fill="#8a8a8c"/><circle cx="1346.6" cy="23.2" r="11.8" fill="#e33b2e"/><path d="M1346.6 23.2L1336.4 29.2A11.8 11.8 0 0 1 1336.4 17.3Z" fill="#e33b2e"/><path d="M1346.6 23.2L1336.2 17.4A11.9 11.9 0 0 0 1346.2 35Z" fill="#2da94f"/><path d="M1346.6 23.2L1346.2 35A11.8 11.8 0 0 0 1357 17.4Z" fill="#fcc934"/><path d="M1336.3 17.3A11.8 11.8 0 0 1 1357 17.3L1346.6 17.3Z" fill="#e33b2e"/><circle cx="1346.6" cy="23.2" r="5.6" fill="#f2f2f2"/><circle cx="1346.6" cy="23.2" r="4.4" fill="#3d7ee8"/><circle cx="1390.8" cy="23" r="11" fill="#1c1b2a" stroke="#6a3fd8" stroke-width="1.8"/><path d="M1381 17A11 11 0 0 1 1400 17" fill="none" stroke="#2aa8ea" stroke-width="1.8"/><path d="M1384.6 19.6H1396V27.6H1384.6Z" fill="#5a45d6"/><path d="M1384.6 23.4H1396M1390.2 19.6V27.6" stroke="#1c1b2a" stroke-width="1"/><path d="M1393 21L1396.6 16.4L1399.4 21.4H1397.4V24H1395V21Z" fill="#2aa8ea"/><circle cx="1435" cy="23" r="12.2" fill="#ffffff"/><path d="M1428.6 15L1435 24.4V32" fill="none" stroke="#fc3f1d" stroke-width="3.2" stroke-linecap="round" stroke-linejoin="round"/><path d="M1435 24.4L1441.4 15" fill="none" stroke="#ff5ac8" stroke-width="3.2" stroke-linecap="round"/><rect x="1459.6" y="3.4" width="39" height="39" rx="4" fill="#2f2f31" stroke="#3a3a3c" stroke-width="1"/><path d="M1470 12L1486.6 10.6Q1490.4 10.6 1490.4 14.4V30.4Q1490.4 32.6 1488.2 32.6H1470.6Q1468 32.6 1468 30V15Q1468 12.4 1470 12Z" fill="#ff6b00"/><path d="M1468 15Q1468 12.4 1470 12L1472 13.6L1470 16.6V28H1468Z" fill="#ffa45c"/><path d="M1470 26.6H1490.4V30.4Q1490.4 32.6 1488.2 32.6H1471.6Q1470 32.6 1470 31Z" fill="#9c3a08"/><path d="M1475.6 14.6H1483.6V17H1478.4V19.4H1482.6V21.6H1478.4V25.6H1475.6Z" fill="#fff"/><rect x="1474.6" y="28.4" width="10" height="2.4" fill="#e0a27c"/><rect x="1471" y="39" width="16.6" height="2.8" rx="1.4" fill="#8ecbee"/><path d="M2354 25.6L2359.2 20.4L2364.4 25.6" fill="none" stroke="#f4f4f4" stroke-width="1.8"/><g fill="none" stroke="#f4f4f4" stroke-width="1.3"><path d="M2438.4 15.6H2427.6V27.6H2439.8"/><path d="M2431.6 27.6V30.2M2435.8 27.6V30.2M2429.8 30.4H2438.6"/><rect x="2439.2" y="15.4" width="3.4" height="5.4" rx=".6"/><path d="M2440.9 20.8V30.8"/></g><g fill="none" stroke="#f4f4f4" stroke-width="1.3"><path d="M2451.2 20.4H2453.8L2457.4 17.2V29L2453.8 25.8H2451.2Z"/><path d="M2459.8 20.4Q2461.6 23.1 2459.8 25.8M2462 18.4Q2465 23.1 2462 27.8"/><path d="M2464.6 16.6Q2468 23.1 2464.6 29.6" stroke="#5f5f61" stroke-width="1"/></g></svg>
<div style="position:absolute;left:2385.80px;transform-origin:0 0;top:1410.04px;font-size:11px;line-height:14.3px;color:#ffffff;white-space:pre;font-weight:bold;transform:scaleX(0.9439);">ENG</div>
<div style="position:absolute;right:18.80px;transform-origin:100% 0;top:1400.64px;font-size:11.8px;line-height:15.34px;color:#ffffff;white-space:pre;transform:scaleX(0.9754);-webkit-text-stroke:.3px #fff;">8:39</div>
<div style="position:absolute;right:18.80px;transform-origin:100% 0;top:1416.84px;font-size:11.8px;line-height:15.34px;color:#ffffff;white-space:pre;transform:scaleX(0.9856);-webkit-text-stroke:.3px #fff;">26.03.2026</div>
</body></html>
